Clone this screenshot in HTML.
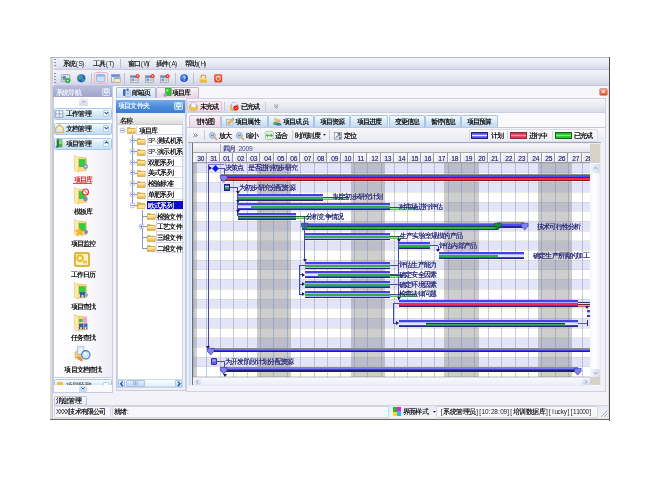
<!DOCTYPE html>
<html><head><meta charset="utf-8"><style>
html,body{margin:0;padding:0;}
body{width:660px;height:477px;position:relative;overflow:hidden;background:#fff;font-family:"Liberation Sans",sans-serif;}
.a{position:absolute;}
.t,.gl{position:absolute;white-space:nowrap;line-height:10px;font-size:7px;letter-spacing:-.8px;text-shadow:0 0 .15px currentColor;will-change:transform;}
.gl{text-shadow:0 0 .25px currentColor;}
i{display:inline-block;width:6.2px;font-style:normal;text-align:center;letter-spacing:0;}
.sb i{width:6.5px;}
.nc i{-webkit-text-fill-color:transparent;text-shadow:none;position:relative;}
.nc i::before{content:'';position:absolute;left:0.5px;top:1.6px;width:5.2px;height:5.8px;background:repeating-linear-gradient(currentColor 0 1px,transparent 1px 2px),linear-gradient(90deg,transparent 0 2px,currentColor 2px 3px,transparent 3px);opacity:.55;}
.l{text-shadow:none;letter-spacing:0;}
.l b{display:inline-block;width:3.1px;text-align:center;font-weight:normal;font-size:6.4px;}
.s{letter-spacing:0;font-size:6px;}
</style></head><body>
<div class="a " style="left:50px;top:57px;width:559.5px;height:363px;background:#f3f3f8;"></div>
<div class="a " style="left:50px;top:57px;width:2.3px;height:363px;background:#dedad2;"></div>
<div class="a " style="left:52.3px;top:57px;width:1.2px;height:363px;background:#c4c8e2;"></div>
<div class="a " style="left:608.6px;top:57px;width:1.2px;height:363.5px;background:#4a4a4a;"></div>
<div class="a " style="left:50px;top:419.3px;width:559.8px;height:1.0px;background:#7a7a7a;"></div>
<div class="a " style="left:53.5px;top:57px;width:555px;height:13.2px;background:linear-gradient(#f6f6fb,#e4e6f2 70%,#d6d9ea);border-bottom:1px solid #c6cadf;box-sizing:border-box;"></div>
<div class="a " style="left:50px;top:56.6px;width:559.5px;height:0.9px;background:#b4b8cc;"></div>
<div class="a " style="left:54.3px;top:59px;width:1.6px;height:9px;background:repeating-linear-gradient(#8a90b8 0 1px,transparent 1px 3px);"></div>
<div class="t " style="left:62.7px;top:58.90px;color:#222;"><i>系</i><i>统</i><span class="l"><b>(</b><b>S</b><b>)</b></span></div>
<div class="t " style="left:93px;top:58.90px;color:#222;"><i>工</i><i>具</i><span class="l"><b>(</b><b>T</b><b>)</b></span></div>
<div class="t " style="left:127.5px;top:58.90px;color:#222;"><i>窗</i><i>口</i><span class="l"><b>(</b><b>W</b><b>)</b></span></div>
<div class="t " style="left:156px;top:58.90px;color:#222;"><i>插</i><i>件</i><span class="l"><b>(</b><b>A</b><b>)</b></span></div>
<div class="t " style="left:185px;top:58.90px;color:#222;"><i>帮</i><i>助</i><span class="l"><b>(</b><b>H</b><b>)</b></span></div>
<div class="a " style="left:120.3px;top:59px;width:1px;height:9px;background:#b8bcd4;"></div>
<div class="a " style="left:53.5px;top:70.2px;width:555px;height:15.6px;background:linear-gradient(#f4f5fa,#e2e4f0 60%,#d2d5e6);border-bottom:1px solid #c0c4da;box-sizing:border-box;"></div>
<div class="a " style="left:54.3px;top:73px;width:1.6px;height:10px;background:repeating-linear-gradient(#8a90b8 0 1px,transparent 1px 3px);"></div>
<svg class="a" style="left:61.3px;top:73.8px;overflow:visible" width="9.5" height="8.8" viewBox="0 0 9.5 8.8"><rect x="0.4" y="0.6" width="8.4" height="7" rx="0.8" fill="#dfe6ee" stroke="#8c98a8" stroke-width="0.8"/><rect x="1.6" y="2.2" width="3.2" height="2.6" fill="#4a7ab8"/><rect x="1.6" y="4.8" width="3" height="1.4" fill="#60b070"/><circle cx="6.8" cy="6.6" r="2.3" fill="#2cb040" stroke="#1a7a28" stroke-width="0.4"/><circle cx="6.8" cy="6.6" r="0.9" fill="#d8f8d8"/></svg>
<svg class="a" style="left:76.7px;top:73.9px;overflow:visible" width="8.6" height="8.6" viewBox="0 0 8.6 8.6"><circle cx="4.3" cy="4.3" r="4.1" fill="#2060c8"/><circle cx="3.4" cy="3.2" r="2.4" fill="#5aa0f0" opacity="0.7"/><path d="M1.8 2.2C3 1.2 4.5 2 4.2 3.2C4 4.2 2.6 4.2 2.8 5.4C3 6.6 1.6 6.2 1.2 4.8Z" fill="#3ab040"/><path d="M5.2 4.6C6.4 4 7.6 4.8 7.2 6.2C6.8 7.4 5.4 7.8 5 6.8Z" fill="#3ab040"/></svg>
<div class="a " style="left:93.6px;top:72.2px;width:14.4px;height:11.7px;background:linear-gradient(#fdf0f4,#f6dfe8);border:1px solid #e4b4c8;border-radius:2px;box-sizing:border-box;"></div>
<svg class="a" style="left:96.2px;top:74.0px;overflow:visible" width="9.4" height="8.2" viewBox="0 0 9.4 8.2"><rect x="0.4" y="0.4" width="8.6" height="7.4" rx="1" fill="#cfe0f6" stroke="#7c9cd0" stroke-width="0.7"/><rect x="0.8" y="0.8" width="7.8" height="1.8" fill="#8cb4ec"/></svg>
<svg class="a" style="left:110.6px;top:73.8px;overflow:visible" width="9.6" height="8.8" viewBox="0 0 9.6 8.8"><rect x="0.4" y="0.4" width="8.4" height="7.8" fill="#e8ecf0" stroke="#8a98b0" stroke-width="0.7"/><rect x="0.8" y="0.8" width="7.6" height="2" fill="#5a88d8"/><rect x="3" y="3.6" width="6.2" height="4.8" fill="#f4e8c0" stroke="#a0a080" stroke-width="0.5"/><rect x="3.6" y="3.8" width="5" height="1.2" fill="#7aa0e0"/></svg>
<div class="a " style="left:90.5px;top:72.5px;width:0.9px;height:11.5px;background:#bcc0d6;"></div>
<div class="a " style="left:124.2px;top:72.5px;width:0.9px;height:11.5px;background:#bcc0d6;"></div>
<div class="a " style="left:174.7px;top:72.5px;width:0.9px;height:11.5px;background:#bcc0d6;"></div>
<div class="a " style="left:193.3px;top:72.5px;width:0.9px;height:11.5px;background:#bcc0d6;"></div>
<svg class="a" style="left:130.3px;top:73.5px;overflow:visible" width="9.6" height="9.2" viewBox="0 0 9.6 9.2"><rect x="0.4" y="1.6" width="8" height="7" fill="#f0ece0" stroke="#8a8a90" stroke-width="0.6"/><rect x="0.8" y="2" width="7.2" height="1.8" fill="#5a88d0"/><rect x="1.5" y="4.6" width="2.5" height="2.6" fill="#6a98d8"/><rect x="4.6" y="4.6" width="3" height="1" fill="#b0b0b0"/><rect x="4.6" y="6.2" width="3" height="1" fill="#b0b0b0"/><circle cx="7.6" cy="2.2" r="2.1" fill="#e83a30"/><path d="M6.8 1.4L8.4 3M8.4 1.4L6.8 3" stroke="#fff" stroke-width="0.6"/></svg>
<svg class="a" style="left:145.0px;top:73.5px;overflow:visible" width="9.6" height="9.2" viewBox="0 0 9.6 9.2"><rect x="0.4" y="1.6" width="8" height="7" fill="#f0ece0" stroke="#8a8a90" stroke-width="0.6"/><rect x="0.8" y="2" width="7.2" height="1.8" fill="#5a88d0"/><rect x="1.5" y="4.6" width="2.5" height="2.6" fill="#6a98d8"/><rect x="4.6" y="4.6" width="3" height="1" fill="#b0b0b0"/><rect x="4.6" y="6.2" width="3" height="1" fill="#b0b0b0"/><circle cx="7.6" cy="2.2" r="2.1" fill="#e83a30"/><path d="M6.8 1.4L8.4 3M8.4 1.4L6.8 3" stroke="#fff" stroke-width="0.6"/></svg>
<svg class="a" style="left:160.0px;top:73.5px;overflow:visible" width="9.6" height="9.2" viewBox="0 0 9.6 9.2"><rect x="0.4" y="1.6" width="8" height="7" fill="#f0ece0" stroke="#8a8a90" stroke-width="0.6"/><rect x="0.8" y="2" width="7.2" height="1.8" fill="#5a88d0"/><rect x="1.5" y="4.6" width="2.5" height="2.6" fill="#6a98d8"/><rect x="4.6" y="4.6" width="3" height="1" fill="#b0b0b0"/><rect x="4.6" y="6.2" width="3" height="1" fill="#b0b0b0"/><circle cx="7.6" cy="2.2" r="2.1" fill="#e83a30"/><path d="M6.8 1.4L8.4 3M8.4 1.4L6.8 3" stroke="#fff" stroke-width="0.6"/></svg>
<svg class="a" style="left:179.8px;top:74.2px;overflow:visible" width="8.2" height="8.2" viewBox="0 0 8.2 8.2"><circle cx="4.1" cy="4.1" r="3.9" fill="#2458c8"/><circle cx="3.6" cy="3.2" r="2.6" fill="#6aa0f0" opacity="0.65"/><path d="M2.9 3.2C2.9 2.2 5.3 2.2 5.3 3.3C5.3 4.2 4.1 4.2 4.1 5.2" stroke="#fff" stroke-width="0.8" fill="none"/><circle cx="4.1" cy="6.3" r="0.5" fill="#fff"/></svg>
<svg class="a" style="left:199.0px;top:73.6px;overflow:visible" width="8.6" height="9.0" viewBox="0 0 8.6 9.0"><path d="M2 4.2V2.8C2 0.4 6.6 0.4 6.6 2.8V4.2" stroke="#c8a040" stroke-width="1.1" fill="none"/><rect x="0.6" y="4" width="7.4" height="4.8" rx="0.6" fill="#e8c040"/><rect x="0.6" y="4" width="7.4" height="1.6" fill="#f8e080"/></svg>
<svg class="a" style="left:214.2px;top:73.8px;overflow:visible" width="8.4" height="8.6" viewBox="0 0 8.4 8.6"><rect x="0.2" y="0.2" width="8" height="8.2" rx="1.4" fill="#e84a28"/><rect x="0.6" y="0.5" width="7.2" height="3" rx="1" fill="#f88a68" opacity="0.6"/><circle cx="4.2" cy="4.4" r="2.1" stroke="#fff" stroke-width="0.8" fill="none"/><path d="M4.2 1.8V4.4" stroke="#fff" stroke-width="0.8"/></svg>
<div class="a " style="left:113px;top:86px;width:495.5px;height:12.2px;background:#f7f7fa;"></div>
<div class="a " style="left:116px;top:86.5px;width:40px;height:11.3px;background:linear-gradient(#f2f7fc,#c8dcf0);border:1px solid #a6bfdc;border-bottom:none;border-radius:2px 2px 0 0;box-sizing:border-box;"></div>
<svg class="a" style="left:121.9px;top:88.0px;overflow:visible" width="8.8" height="8.8" viewBox="0 0 8.8 8.8"><path d="M1 2.5C1 1 3 0.6 3.6 1.8V7.6C3 8.4 1 8.2 1 7Z" fill="#3a6ad0"/><rect x="3.8" y="2.6" width="4.4" height="5.8" fill="#e4ecf8" stroke="#7a98c8" stroke-width="0.5"/><path d="M4.6 4H7.4M4.6 5.4H7.4M4.6 6.8H7.4" stroke="#5a80c0" stroke-width="0.5"/><circle cx="5.6" cy="1.6" r="1.2" fill="#3a6ad0"/></svg>
<div class="t " style="left:131.8px;top:87.90px;color:#111;"><i>邮</i><i>箱</i><i>页</i></div>
<div class="a " style="left:155.6px;top:86.5px;width:43.8px;height:11.3px;background:linear-gradient(#fbf3f8,#e6d4e4);border:1px solid #c8b0c8;border-bottom:none;border-radius:2px 2px 0 0;box-sizing:border-box;"></div>
<svg class="a" style="left:163.3px;top:87.8px;overflow:visible" width="8.6" height="9.2" viewBox="0 0 8.6 9.2"><rect x="2.6" y="0.4" width="5.6" height="7.2" fill="#30c030" stroke="#1a8a1a" stroke-width="0.5"/><rect x="3.4" y="1.2" width="2" height="2.4" fill="#a0f0a0"/><circle cx="2.2" cy="7" r="1.8" fill="#9aa0b8"/></svg>
<div class="t " style="left:172px;top:87.90px;color:#111;"><i>项</i><i>目</i><i>库</i></div>
<div class="a " style="left:599px;top:87.6px;width:8.5px;height:8px;background:linear-gradient(#f89880,#e04828);border:1px solid #d8a090;border-radius:2px;box-sizing:border-box;color:#fff;font-size:7px;line-height:6px;text-align:center;font-weight:bold;">×</div>
<div class="a " style="left:52.8px;top:86.3px;width:60px;height:306.5px;background:#fff;border:1px solid #c8cce0;box-sizing:border-box;"></div>
<div class="a " style="left:53px;top:86.4px;width:59.3px;height:10.6px;background:linear-gradient(#b8bcdc,#9ea3cc);"></div>
<div class="t " style="left:55.9px;top:87.70px;color:#f4f4ff;"><i>系</i><i>统</i><i>导</i><i>航</i></div>
<div class="a " style="left:101.6px;top:87.8px;width:8.4px;height:8.2px;background:linear-gradient(#c4c8e6,#a8acd6);border:0.8px solid #d8dcf2;border-radius:1px;box-sizing:border-box;"></div>
<svg class="a" style="left:101.6px;top:87.8px;overflow:visible" width="8.4" height="8.2" viewBox="0 0 8.4 8.2"><path d="M2.6 1.6H5.8V4.4H2.6Z M1.6 4.6H6.8 M4.2 4.6V7" stroke="#f4f4ff" stroke-width="0.9" fill="none"/></svg>
<div class="a " style="left:78.6px;top:98.4px;width:9.4px;height:7.4px;background:linear-gradient(#f2f2f8,#d8dae8);border-radius:1.5px;"></div>
<svg class="a" style="left:78.6px;top:98.4px;overflow:visible" width="9.4" height="7.4" viewBox="0 0 9.4 7.4"><path d="M3 4.6L4.7 3L6.4 4.6" stroke="#8a90b0" stroke-width="0.9" fill="none"/></svg>
<div class="a " style="left:53.5px;top:107.5px;width:58px;height:12px;background:linear-gradient(#f6fbff,#d8ebf9 45%,#c2def5);border:1px solid #a8c8e8;border-radius:1.5px;box-sizing:border-box;"></div>
<div class="t " style="left:66.2px;top:109.20px;color:#1a1a1a;"><i>工</i><i>作</i><i>管</i><i>理</i></div>
<div class="a " style="left:102.5px;top:109.9px;width:6.8px;height:6.8px;background:linear-gradient(#ffffff,#eef5fc);border:0.8px solid #b8d0ea;border-radius:1px;box-sizing:border-box;"></div>
<svg class="a" style="left:102.5px;top:110.1px;overflow:visible" width="6.8" height="6.8" viewBox="0 0 6.8 6.8"><path d="M1.6 2.2L3.4 3.8L5.2 2.2" stroke="#2a50a8" stroke-width="1.1" fill="none"/></svg>
<svg class="a" style="left:55.3px;top:109.5px;overflow:visible" width="8.6" height="8" viewBox="0 0 8.6 8"><rect x="0.3" y="0.3" width="8" height="7.4" fill="#8a9ab8"/><rect x="1.2" y="1.1" width="2.7" height="2.4" fill="#f4f6fa"/><rect x="4.7" y="1.1" width="2.7" height="2.4" fill="#f4f6fa"/><rect x="1.2" y="4.3" width="2.7" height="2.5" fill="#f4f6fa"/><rect x="4.7" y="4.3" width="2.7" height="2.5" fill="#f4f6fa"/></svg>
<div class="a " style="left:53.5px;top:122.5px;width:58px;height:12px;background:linear-gradient(#f6fbff,#d8ebf9 45%,#c2def5);border:1px solid #a8c8e8;border-radius:1.5px;box-sizing:border-box;"></div>
<div class="t " style="left:66.2px;top:124.20px;color:#1a1a1a;"><i>文</i><i>档</i><i>管</i><i>理</i></div>
<div class="a " style="left:102.5px;top:124.9px;width:6.8px;height:6.8px;background:linear-gradient(#ffffff,#eef5fc);border:0.8px solid #b8d0ea;border-radius:1px;box-sizing:border-box;"></div>
<svg class="a" style="left:102.5px;top:125.1px;overflow:visible" width="6.8" height="6.8" viewBox="0 0 6.8 6.8"><path d="M1.6 2.2L3.4 3.8L5.2 2.2" stroke="#2a50a8" stroke-width="1.1" fill="none"/></svg>
<svg class="a" style="left:54.8px;top:124.0px;overflow:visible" width="9" height="9" viewBox="0 0 9 9"><path d="M0.8 4.2L4.5 0.8L8.2 4.2V8.2H0.8Z" fill="#eef4fc" stroke="#e0a828" stroke-width="1.1"/><path d="M1.4 4.6L4.5 6.6L7.6 4.6" stroke="#b8c8e0" stroke-width="0.6" fill="none"/></svg>
<div class="a " style="left:53.5px;top:137.5px;width:58px;height:12px;background:linear-gradient(#f6fbff,#d8ebf9 45%,#c2def5);border:1px solid #a8c8e8;border-radius:1.5px;box-sizing:border-box;"></div>
<div class="t " style="left:66.2px;top:139.20px;color:#1a1a1a;"><i>项</i><i>目</i><i>管</i><i>理</i></div>
<div class="a " style="left:102.5px;top:139.9px;width:6.8px;height:6.8px;background:linear-gradient(#ffffff,#eef5fc);border:0.8px solid #b8d0ea;border-radius:1px;box-sizing:border-box;"></div>
<svg class="a" style="left:102.5px;top:140.1px;overflow:visible" width="6.8" height="6.8" viewBox="0 0 6.8 6.8"><path d="M1.6 3.4L3.4 1.8L5.2 3.4" stroke="#2a50a8" stroke-width="1.1" fill="none"/></svg>
<svg class="a" style="left:55.6px;top:139.4px;overflow:visible" width="7" height="8.8" viewBox="0 0 7 8.8"><rect x="0.8" y="0.3" width="5.6" height="8" fill="#50a850"/><rect x="0.8" y="0.3" width="2" height="8" fill="#307a30"/><rect x="3" y="1" width="3" height="4" fill="#8ad08a"/><circle cx="1.2" cy="7.8" r="1" fill="#3050b0"/></svg>
<div class="a " style="left:53.5px;top:149.5px;width:58.3px;height:228.5px;background:linear-gradient(90deg,#ffffff,#fafafd 60%,#ececf5);"></div>
<svg class="a" style="left:74.4px;top:155.4px;overflow:visible" width="16" height="17.5" viewBox="0 0 16 17.5"><path d="M4 1.8L12.8 2.6V16L4 16.6Z" fill="#ecc45a"/><path d="M4.6 2.6L12.2 3.2V15.4L4.6 15.8Z" fill="#f6dc8a"/><rect x="5.2" y="4.6" width="6" height="7.2" fill="#30d040" stroke="#20a030" stroke-width="0.4"/><path d="M0.4 0.4L4.6 2.6V17.2L0.6 15.6Z" fill="#fbeaa8" stroke="#dcbc5c" stroke-width="0.5"/><circle cx="11.5" cy="11.5" r="2.4" fill="#7a88c8"/><circle cx="11.5" cy="11.5" r="1.2" fill="#c8d0f0"/></svg>
<div class="a " style="left:72.9px;top:183.10000000000002px;width:19px;height:0.8px;background:#f04040;"></div>
<div class="t " style="left:53.5px;top:175.30px;color:#e02020;width:58px;text-align:center;"><i>项</i><i>目</i><i>库</i></div>
<svg class="a" style="left:74.4px;top:187.02px;overflow:visible" width="16" height="17.5" viewBox="0 0 16 17.5"><path d="M4 1.8L12.8 2.6V16L4 16.6Z" fill="#ecc45a"/><path d="M4.6 2.6L12.2 3.2V15.4L4.6 15.8Z" fill="#f6dc8a"/><rect x="5.2" y="4.6" width="6" height="7.2" fill="#30d040" stroke="#20a030" stroke-width="0.4"/><path d="M0.4 0.4L4.6 2.6V17.2L0.6 15.6Z" fill="#fbeaa8" stroke="#dcbc5c" stroke-width="0.5"/><circle cx="11.5" cy="5" r="3" fill="#fff" stroke="#e83030" stroke-width="1.2"/><path d="M9.6 3.2L13.4 6.8" stroke="#e83030" stroke-width="1"/><circle cx="11.5" cy="12" r="2.2" fill="#7a88c8"/></svg>
<div class="t " style="left:53.5px;top:206.92px;color:#111;width:58px;text-align:center;"><i>模</i><i>板</i><i>库</i></div>
<svg class="a" style="left:74.4px;top:218.64000000000001px;overflow:visible" width="16" height="17.5" viewBox="0 0 16 17.5"><path d="M4 1.8L12.8 2.6V16L4 16.6Z" fill="#ecc45a"/><path d="M4.6 2.6L12.2 3.2V15.4L4.6 15.8Z" fill="#f6dc8a"/><rect x="5.2" y="4.6" width="6" height="7.2" fill="#30d040" stroke="#20a030" stroke-width="0.4"/><path d="M0.4 0.4L4.6 2.6V17.2L0.6 15.6Z" fill="#fbeaa8" stroke="#dcbc5c" stroke-width="0.5"/><path d="M5.5 8.5L6.8 11.3L9.8 11.5L7.5 13.4L8.3 16.3L5.5 14.6L2.7 16.3L3.5 13.4L1.2 11.5L4.2 11.3Z" fill="#f8c020" stroke="#e08010" stroke-width="0.4"/><circle cx="12" cy="13" r="2" fill="#7a88c8"/></svg>
<div class="t " style="left:53.5px;top:238.54px;color:#111;width:58px;text-align:center;"><i>项</i><i>目</i><i>监</i><i>控</i></div>
<svg class="a" style="left:74.2px;top:251.66000000000003px;overflow:visible" width="16" height="15" viewBox="0 0 16 15"><rect x="0.5" y="0.5" width="15" height="14" rx="1.5" fill="#e8b830" stroke="#c89820" stroke-width="0.6"/><rect x="2" y="2" width="12" height="11" rx="1" fill="#fcf4c8"/><circle cx="6" cy="6.2" r="3.4" fill="#f0c838" stroke="#c89820" stroke-width="0.6"/><circle cx="6" cy="6.2" r="1.6" fill="#fff4c0"/><rect x="9" y="8.5" width="4" height="3" fill="#f0c838"/></svg>
<div class="t " style="left:53.5px;top:270.16px;color:#111;width:58px;text-align:center;"><i>工</i><i>作</i><i>日</i><i>历</i></div>
<svg class="a" style="left:74.4px;top:281.88000000000005px;overflow:visible" width="16" height="17.5" viewBox="0 0 16 17.5"><path d="M4 1.8L12.8 2.6V16L4 16.6Z" fill="#ecc45a"/><path d="M4.6 2.6L12.2 3.2V15.4L4.6 15.8Z" fill="#f6dc8a"/><rect x="5.2" y="4.6" width="6" height="7.2" fill="#30d040" stroke="#20a030" stroke-width="0.4"/><path d="M0.4 0.4L4.6 2.6V17.2L0.6 15.6Z" fill="#fbeaa8" stroke="#dcbc5c" stroke-width="0.5"/><path d="M6 10H11V15.5H9.5V13H7.5V15.5H6Z" fill="#3a5ab8"/><circle cx="12.5" cy="13" r="1.8" fill="#a0a8d8"/></svg>
<div class="t " style="left:53.5px;top:301.78px;color:#111;width:58px;text-align:center;"><i>项</i><i>目</i><i>查</i><i>找</i></div>
<svg class="a" style="left:74.4px;top:313.5px;overflow:visible" width="16" height="17.5" viewBox="0 0 16 17.5"><path d="M4 1.8L12.8 2.6V16L4 16.6Z" fill="#ecc45a"/><path d="M4.6 2.6L12.2 3.2V15.4L4.6 15.8Z" fill="#f6dc8a"/><path d="M0.4 0.4L4.6 2.6V17.2L0.6 15.6Z" fill="#fbeaa8" stroke="#dcbc5c" stroke-width="0.5"/><rect x="8.5" y="3.5" width="4.5" height="5" fill="#f0a0d8"/><rect x="5" y="5" width="3.5" height="3" fill="#40c040"/><path d="M5 9.5H9V15.5H7.8V13H6.2V15.5H5Z" fill="#3a5ab8"/><path d="M9.5 9.5H13.5V15.5H12.3V13H10.7V15.5H9.5Z" fill="#4a6ac8"/></svg>
<div class="t " style="left:53.5px;top:333.40px;color:#111;width:58px;text-align:center;"><i>任</i><i>务</i><i>查</i><i>找</i></div>
<svg class="a" style="left:73.8px;top:345.52px;overflow:visible" width="18" height="16" viewBox="0 0 18 16"><path d="M1 6L8 2V15L1 12Z" fill="#f4d070" stroke="#c8a040" stroke-width="0.5"/><rect x="3.5" y="0.8" width="6.5" height="7.5" fill="#e8f0fc" stroke="#80a0d0" stroke-width="0.6"/><path d="M2.5 11L7 15.5L9 14L5 10Z" fill="#e89040"/><circle cx="11.8" cy="8.8" r="4.2" fill="#c8e8fc" stroke="#3a78b8" stroke-width="1.1"/><circle cx="11" cy="7.8" r="1.6" fill="#ffffff" opacity="0.8"/></svg>
<div class="t " style="left:53.5px;top:365.02px;color:#111;width:58px;text-align:center;"><i>项</i><i>目</i><i>文</i><i>档</i><i>查</i><i>找</i></div>
<div class="a " style="left:53.5px;top:376.9px;width:58.3px;height:0.9px;background:#c8cce6;"></div>
<div class="a" style="left:53.5px;top:379.3px;width:58.3px;height:5.4px;overflow:hidden;">
<div class="a" style="left:0;top:0;width:58px;height:12px;background:linear-gradient(#f6fbff,#d8ebf9 45%,#c2def5);border:1px solid #a8c8e8;border-radius:1.5px;box-sizing:border-box;"></div>
<div class="a" style="left:3px;top:2.4px;width:6px;height:5px;background:#f0c040;border-radius:1px;"></div>
<div class="t" style="left:12.7px;top:1.7px;color:#666;"><i>项</i><i>目</i><i>预</i><i>警</i></div>
<div class="a" style="left:49px;top:2.4px;width:6.8px;height:6.8px;background:#fff;border:0.8px solid #b8d0ea;border-radius:1px;box-sizing:border-box;"></div>
</div>
<div class="a " style="left:53.5px;top:384.7px;width:58.3px;height:7.6px;background:#fafafd;"></div>
<div class="a " style="left:78.6px;top:385.4px;width:8.2px;height:6.4px;background:linear-gradient(#e2eefa,#bcd8f2);border-radius:1.5px;"></div>
<svg class="a" style="left:78.6px;top:385.4px;overflow:visible" width="8.2" height="6.4" viewBox="0 0 8.2 6.4"><path d="M2.4 2.4L4.1 4L5.8 2.4" stroke="#2a50a8" stroke-width="1" fill="none"/></svg>
<div class="a " style="left:115.5px;top:99.5px;width:70px;height:291px;background:#eef0f8;border:1px solid #c8cce0;box-sizing:border-box;"></div>
<div class="a " style="left:115.6px;top:99.7px;width:69px;height:13px;background:linear-gradient(#74aee8,#4a8ad8 55%,#3e7ed0);"></div>
<div class="t " style="left:118.1px;top:101.30px;color:#f0f6ff;"><i>项</i><i>目</i><i>文</i><i>件</i><i>夹</i></div>
<div class="a " style="left:174px;top:102.2px;width:9px;height:8px;background:linear-gradient(#98c8f4,#68a4e8);border:0.8px solid #c0dcf8;border-radius:1px;box-sizing:border-box;"></div>
<svg class="a" style="left:174px;top:102.2px;overflow:visible" width="9" height="8" viewBox="0 0 9 8"><path d="M2.8 1.6H6.2V4.4H2.8Z M1.8 4.6H7.2 M4.5 4.6V7" stroke="#ffffff" stroke-width="0.9" fill="none"/></svg>
<div class="a " style="left:117.3px;top:114.8px;width:66px;height:273px;background:#fff;border:1px solid #d0d4e0;box-sizing:border-box;"></div>
<div class="a " style="left:117.7px;top:115px;width:65px;height:10.2px;background:linear-gradient(#f6f6f6,#dcdcdc);border-bottom:1px solid #c8c8c8;box-sizing:border-box;"></div>
<div class="t " style="left:120.3px;top:115.50px;color:#222;"><i>名</i><i>称</i></div>
<svg width="0" height="0" style="position:absolute"><defs><linearGradient id="fg" x1="0" y1="0" x2="0" y2="1"><stop offset="0" stop-color="#fff2b0"/><stop offset="1" stop-color="#e8b440"/></linearGradient></defs></svg>
<div class="a " style="left:135.8px;top:125.6px;width:47.8px;height:9.5px;border-left:0.8px solid #d4d8ee;border-bottom:0.8px solid #d4d8ee;box-sizing:border-box;"></div>
<svg class="a" style="left:120.0px;top:127.80000000000001px;overflow:visible" width="5" height="5" viewBox="0 0 5 5"><rect x="0.3" y="0.3" width="4.4" height="4.4" rx="1.2" fill="#fafbff" stroke="#8a96c8" stroke-width="0.6"/><path d="M1 2.5H4" stroke="#4a5a98" stroke-width="0.6"/></svg>
<svg class="a" style="left:127px;top:127.39999999999999px;overflow:visible" width="8.6" height="6.8" viewBox="0 0 8.6 6.8"><path d="M0.3 0.6H3.2L3.9 1.3H8.2V6.4H0.3Z" fill="#e0a838"/><rect x="0.5" y="2" width="7.6" height="4.3" fill="url(#fg)"/><path d="M0.3 0.6H3.2L3.9 1.3H8.2V6.4H0.3Z" fill="none" stroke="#b8903a" stroke-width="0.4"/></svg>
<div class="t " style="left:138.5px;top:125.80px;color:#111;"><i>项</i><i>目</i><i>库</i></div>
<div class="a " style="left:132.0px;top:134.5px;width:0.8px;height:71px;background:#8a96c8;"></div>
<div class="a " style="left:146.5px;top:135.4px;width:37.1px;height:10.7px;border-left:0.8px solid #d4d8ee;border-bottom:0.8px solid #d4d8ee;box-sizing:border-box;"></div>
<div class="a " style="left:132.4px;top:140.4px;width:4.6px;height:0.8px;background:#8a96c8;"></div>
<svg class="a" style="left:129.9px;top:138.3px;overflow:visible" width="5" height="5" viewBox="0 0 5 5"><rect x="0.3" y="0.3" width="4.4" height="4.4" rx="1.2" fill="#fafbff" stroke="#8a96c8" stroke-width="0.6"/><path d="M1 2.5H4M2.5 1V4" stroke="#4a5a98" stroke-width="0.6"/></svg>
<svg class="a" style="left:137px;top:138.0px;overflow:visible" width="8.6" height="6.8" viewBox="0 0 8.6 6.8"><path d="M0.3 0.6H3.2L3.9 1.3H8.2V6.4H0.3Z" fill="#e0a838"/><rect x="0.5" y="2" width="7.6" height="4.3" fill="url(#fg)"/><path d="M0.3 0.6H3.2L3.9 1.3H8.2V6.4H0.3Z" fill="none" stroke="#b8903a" stroke-width="0.4"/></svg>
<div class="t " style="left:148px;top:136.30px;color:#111;"><span class="l"><b>S</b><b>P</b><b>-</b></span><i>测</i><i>试</i><i>机</i><i>系</i></div>
<div class="a " style="left:146.5px;top:146.1px;width:37.1px;height:10.7px;border-left:0.8px solid #d4d8ee;border-bottom:0.8px solid #d4d8ee;box-sizing:border-box;"></div>
<div class="a " style="left:132.4px;top:151.1px;width:4.6px;height:0.8px;background:#8a96c8;"></div>
<svg class="a" style="left:129.9px;top:149.0px;overflow:visible" width="5" height="5" viewBox="0 0 5 5"><rect x="0.3" y="0.3" width="4.4" height="4.4" rx="1.2" fill="#fafbff" stroke="#8a96c8" stroke-width="0.6"/><path d="M1 2.5H4M2.5 1V4" stroke="#4a5a98" stroke-width="0.6"/></svg>
<svg class="a" style="left:137px;top:148.7px;overflow:visible" width="8.6" height="6.8" viewBox="0 0 8.6 6.8"><path d="M0.3 0.6H3.2L3.9 1.3H8.2V6.4H0.3Z" fill="#e0a838"/><rect x="0.5" y="2" width="7.6" height="4.3" fill="url(#fg)"/><path d="M0.3 0.6H3.2L3.9 1.3H8.2V6.4H0.3Z" fill="none" stroke="#b8903a" stroke-width="0.4"/></svg>
<div class="t " style="left:148px;top:147.00px;color:#111;"><span class="l"><b>S</b><b>P</b><b>-</b></span><i>演</i><i>示</i><i>机</i><i>系</i></div>
<div class="a " style="left:146.5px;top:156.8px;width:37.1px;height:10.7px;border-left:0.8px solid #d4d8ee;border-bottom:0.8px solid #d4d8ee;box-sizing:border-box;"></div>
<div class="a " style="left:132.4px;top:161.8px;width:4.6px;height:0.8px;background:#8a96c8;"></div>
<svg class="a" style="left:129.9px;top:159.70000000000002px;overflow:visible" width="5" height="5" viewBox="0 0 5 5"><rect x="0.3" y="0.3" width="4.4" height="4.4" rx="1.2" fill="#fafbff" stroke="#8a96c8" stroke-width="0.6"/><path d="M1 2.5H4M2.5 1V4" stroke="#4a5a98" stroke-width="0.6"/></svg>
<svg class="a" style="left:137px;top:159.4px;overflow:visible" width="8.6" height="6.8" viewBox="0 0 8.6 6.8"><path d="M0.3 0.6H3.2L3.9 1.3H8.2V6.4H0.3Z" fill="#e0a838"/><rect x="0.5" y="2" width="7.6" height="4.3" fill="url(#fg)"/><path d="M0.3 0.6H3.2L3.9 1.3H8.2V6.4H0.3Z" fill="none" stroke="#b8903a" stroke-width="0.4"/></svg>
<div class="t " style="left:148px;top:157.70px;color:#111;"><i>双</i><i>肥</i><i>系</i><i>列</i></div>
<div class="a " style="left:146.5px;top:167.5px;width:37.1px;height:10.7px;border-left:0.8px solid #d4d8ee;border-bottom:0.8px solid #d4d8ee;box-sizing:border-box;"></div>
<div class="a " style="left:132.4px;top:172.5px;width:4.6px;height:0.8px;background:#8a96c8;"></div>
<svg class="a" style="left:129.9px;top:170.4px;overflow:visible" width="5" height="5" viewBox="0 0 5 5"><rect x="0.3" y="0.3" width="4.4" height="4.4" rx="1.2" fill="#fafbff" stroke="#8a96c8" stroke-width="0.6"/><path d="M1 2.5H4M2.5 1V4" stroke="#4a5a98" stroke-width="0.6"/></svg>
<svg class="a" style="left:137px;top:170.1px;overflow:visible" width="8.6" height="6.8" viewBox="0 0 8.6 6.8"><path d="M0.3 0.6H3.2L3.9 1.3H8.2V6.4H0.3Z" fill="#e0a838"/><rect x="0.5" y="2" width="7.6" height="4.3" fill="url(#fg)"/><path d="M0.3 0.6H3.2L3.9 1.3H8.2V6.4H0.3Z" fill="none" stroke="#b8903a" stroke-width="0.4"/></svg>
<div class="t " style="left:148px;top:168.40px;color:#111;"><i>美</i><i>式</i><i>系</i><i>列</i></div>
<div class="a " style="left:146.5px;top:178.20000000000002px;width:37.1px;height:10.7px;border-left:0.8px solid #d4d8ee;border-bottom:0.8px solid #d4d8ee;box-sizing:border-box;"></div>
<div class="a " style="left:132.4px;top:183.20000000000002px;width:4.6px;height:0.8px;background:#8a96c8;"></div>
<svg class="a" style="left:129.9px;top:181.10000000000002px;overflow:visible" width="5" height="5" viewBox="0 0 5 5"><rect x="0.3" y="0.3" width="4.4" height="4.4" rx="1.2" fill="#fafbff" stroke="#8a96c8" stroke-width="0.6"/><path d="M1 2.5H4M2.5 1V4" stroke="#4a5a98" stroke-width="0.6"/></svg>
<svg class="a" style="left:137px;top:180.8px;overflow:visible" width="8.6" height="6.8" viewBox="0 0 8.6 6.8"><path d="M0.3 0.6H3.2L3.9 1.3H8.2V6.4H0.3Z" fill="#e0a838"/><rect x="0.5" y="2" width="7.6" height="4.3" fill="url(#fg)"/><path d="M0.3 0.6H3.2L3.9 1.3H8.2V6.4H0.3Z" fill="none" stroke="#b8903a" stroke-width="0.4"/></svg>
<div class="t " style="left:148px;top:179.10px;color:#111;"><i>检</i><i>验</i><i>标</i><i>准</i></div>
<div class="a " style="left:146.5px;top:188.9px;width:37.1px;height:10.7px;border-left:0.8px solid #d4d8ee;border-bottom:0.8px solid #d4d8ee;box-sizing:border-box;"></div>
<div class="a " style="left:132.4px;top:193.9px;width:4.6px;height:0.8px;background:#8a96c8;"></div>
<svg class="a" style="left:129.9px;top:191.8px;overflow:visible" width="5" height="5" viewBox="0 0 5 5"><rect x="0.3" y="0.3" width="4.4" height="4.4" rx="1.2" fill="#fafbff" stroke="#8a96c8" stroke-width="0.6"/><path d="M1 2.5H4M2.5 1V4" stroke="#4a5a98" stroke-width="0.6"/></svg>
<svg class="a" style="left:137px;top:191.5px;overflow:visible" width="8.6" height="6.8" viewBox="0 0 8.6 6.8"><path d="M0.3 0.6H3.2L3.9 1.3H8.2V6.4H0.3Z" fill="#e0a838"/><rect x="0.5" y="2" width="7.6" height="4.3" fill="url(#fg)"/><path d="M0.3 0.6H3.2L3.9 1.3H8.2V6.4H0.3Z" fill="none" stroke="#b8903a" stroke-width="0.4"/></svg>
<div class="t " style="left:148px;top:189.80px;color:#111;"><i>单</i><i>肥</i><i>系</i><i>列</i></div>
<div class="a " style="left:146.5px;top:199.6px;width:37.1px;height:10.7px;border-left:0.8px solid #d4d8ee;border-bottom:0.8px solid #d4d8ee;box-sizing:border-box;"></div>
<div class="a " style="left:132.4px;top:204.6px;width:4.6px;height:0.8px;background:#8a96c8;"></div>
<svg class="a" style="left:129.9px;top:202.5px;overflow:visible" width="5" height="5" viewBox="0 0 5 5"><rect x="0.3" y="0.3" width="4.4" height="4.4" rx="1.2" fill="#fafbff" stroke="#8a96c8" stroke-width="0.6"/><path d="M1 2.5H4" stroke="#4a5a98" stroke-width="0.6"/></svg>
<svg class="a" style="left:137px;top:202.2px;overflow:visible" width="9.4" height="6.8" viewBox="0 0 9.4 6.8"><path d="M0.3 0.6H3.2L3.9 1.3H7.6V6.4H0.3Z" fill="#e8b848" stroke="#b88a30" stroke-width="0.45"/><path d="M1.6 2.6H9L7.6 6.4H0.3Z" fill="#fde89a" stroke="#c89a38" stroke-width="0.45"/></svg>
<div class="a " style="left:147px;top:200.7px;width:35.8px;height:8.6px;background:#0a0ac0;"></div>
<div class="t " style="left:148px;top:200.50px;color:#fff;"><i>欧</i><i>式</i><i>系</i><i>列</i></div>
<div class="a " style="left:141.5px;top:210px;width:0.8px;height:38.4px;background:#8a96c8;"></div>
<div class="a " style="left:155.8px;top:210.6px;width:27.8px;height:10.7px;border-left:0.8px solid #d4d8ee;border-bottom:0.8px solid #d4d8ee;box-sizing:border-box;"></div>
<div class="a " style="left:141.8px;top:215.6px;width:5px;height:0.8px;background:#8a96c8;"></div>
<svg class="a" style="left:147px;top:213.2px;overflow:visible" width="8.6" height="6.8" viewBox="0 0 8.6 6.8"><path d="M0.3 0.6H3.2L3.9 1.3H8.2V6.4H0.3Z" fill="#e0a838"/><rect x="0.5" y="2" width="7.6" height="4.3" fill="url(#fg)"/><path d="M0.3 0.6H3.2L3.9 1.3H8.2V6.4H0.3Z" fill="none" stroke="#b8903a" stroke-width="0.4"/></svg>
<div class="t " style="left:157.3px;top:211.50px;color:#111;"><i>检</i><i>验</i><i>文</i><i>件</i></div>
<div class="a " style="left:155.8px;top:221.29999999999998px;width:27.8px;height:10.7px;border-left:0.8px solid #d4d8ee;border-bottom:0.8px solid #d4d8ee;box-sizing:border-box;"></div>
<div class="a " style="left:141.8px;top:226.29999999999998px;width:5px;height:0.8px;background:#8a96c8;"></div>
<svg class="a" style="left:139.4px;top:224.2px;overflow:visible" width="5" height="5" viewBox="0 0 5 5"><rect x="0.3" y="0.3" width="4.4" height="4.4" rx="1.2" fill="#fafbff" stroke="#8a96c8" stroke-width="0.6"/><path d="M1 2.5H4M2.5 1V4" stroke="#4a5a98" stroke-width="0.6"/></svg>
<svg class="a" style="left:147px;top:223.89999999999998px;overflow:visible" width="8.6" height="6.8" viewBox="0 0 8.6 6.8"><path d="M0.3 0.6H3.2L3.9 1.3H8.2V6.4H0.3Z" fill="#e0a838"/><rect x="0.5" y="2" width="7.6" height="4.3" fill="url(#fg)"/><path d="M0.3 0.6H3.2L3.9 1.3H8.2V6.4H0.3Z" fill="none" stroke="#b8903a" stroke-width="0.4"/></svg>
<div class="t " style="left:157.3px;top:222.20px;color:#111;"><i>工</i><i>艺</i><i>文</i><i>件</i></div>
<div class="a " style="left:155.8px;top:232.0px;width:27.8px;height:10.7px;border-left:0.8px solid #d4d8ee;border-bottom:0.8px solid #d4d8ee;box-sizing:border-box;"></div>
<div class="a " style="left:141.8px;top:237.0px;width:5px;height:0.8px;background:#8a96c8;"></div>
<svg class="a" style="left:147px;top:234.6px;overflow:visible" width="8.6" height="6.8" viewBox="0 0 8.6 6.8"><path d="M0.3 0.6H3.2L3.9 1.3H8.2V6.4H0.3Z" fill="#e0a838"/><rect x="0.5" y="2" width="7.6" height="4.3" fill="url(#fg)"/><path d="M0.3 0.6H3.2L3.9 1.3H8.2V6.4H0.3Z" fill="none" stroke="#b8903a" stroke-width="0.4"/></svg>
<div class="t " style="left:157.3px;top:232.90px;color:#111;"><i>三</i><i>维</i><i>文</i><i>件</i></div>
<div class="a " style="left:155.8px;top:242.7px;width:27.8px;height:10.7px;border-left:0.8px solid #d4d8ee;border-bottom:0.8px solid #d4d8ee;box-sizing:border-box;"></div>
<div class="a " style="left:141.8px;top:247.7px;width:5px;height:0.8px;background:#8a96c8;"></div>
<svg class="a" style="left:147px;top:245.29999999999998px;overflow:visible" width="8.6" height="6.8" viewBox="0 0 8.6 6.8"><path d="M0.3 0.6H3.2L3.9 1.3H8.2V6.4H0.3Z" fill="#e0a838"/><rect x="0.5" y="2" width="7.6" height="4.3" fill="url(#fg)"/><path d="M0.3 0.6H3.2L3.9 1.3H8.2V6.4H0.3Z" fill="none" stroke="#b8903a" stroke-width="0.4"/></svg>
<div class="t " style="left:157.3px;top:243.60px;color:#111;"><i>二</i><i>维</i><i>文</i><i>件</i></div>
<div class="a " style="left:117.5px;top:379.3px;width:65px;height:8.2px;background:linear-gradient(#fafcff,#e6f0fa);border:0.8px solid #c8dcf0;box-sizing:border-box;"></div>
<div class="a " style="left:117.8px;top:379.6px;width:7.6px;height:7.6px;background:linear-gradient(#eef6fe,#c4dcf4);border:0.7px solid #a8c8e8;border-radius:1px;box-sizing:border-box;"></div>
<svg class="a" style="left:117.8px;top:379.6px;overflow:visible" width="7.6" height="7.6" viewBox="0 0 7.6 7.6"><path d="M4.8 1.6L2.6 3.8L4.8 6" stroke="#2050b0" stroke-width="1.3" fill="none"/></svg>
<div class="a " style="left:126.0px;top:379.6px;width:18.5px;height:7.6px;background:linear-gradient(#e4f0fc,#bcd6f2);border:0.7px solid #a8c4e4;border-radius:1px;box-sizing:border-box;"></div>
<svg class="a" style="left:132.7px;top:381.4px;overflow:visible" width="5" height="4" viewBox="0 0 5 4"><path d="M0.8 0V4M2.5 0V4M4.2 0V4" stroke="#6a8ab8" stroke-width="0.6"/></svg>
<div class="a " style="left:174.8px;top:379.6px;width:7.6px;height:7.6px;background:linear-gradient(#eef6fe,#c4dcf4);border:0.7px solid #a8c8e8;border-radius:1px;box-sizing:border-box;"></div>
<svg class="a" style="left:174.8px;top:379.6px;overflow:visible" width="7.6" height="7.6" viewBox="0 0 7.6 7.6"><path d="M2.8 1.6L5 3.8L2.8 6" stroke="#2050b0" stroke-width="1.3" fill="none"/></svg>
<div class="a " style="left:186px;top:98.2px;width:419.5px;height:293.5px;background:#f2f2f8;border:1px solid #d0d2e4;box-sizing:border-box;"></div>
<div class="a " style="left:186.5px;top:98.8px;width:418.5px;height:14.5px;background:linear-gradient(#f6f6fb,#e8e9f2 55%,#d9dbe9);border-bottom:0.8px solid #cdd0e2;border-radius:0 2px 0 0;box-sizing:border-box;"></div>
<div class="a " style="left:187.3px;top:101.3px;width:35px;height:10.4px;background:linear-gradient(#f8eaf2,#eed6e6);border:0.9px solid #e2c2d8;border-radius:2px;box-sizing:border-box;"></div>
<svg class="a" style="left:189.3px;top:102.0px;overflow:visible" width="8.8" height="8.6" viewBox="0 0 8.8 8.6"><rect x="0.6" y="2.4" width="7.6" height="5.8" rx="1.6" fill="#f0c850" stroke="#c89830" stroke-width="0.6"/><path d="M2 0.6H6.2L7 1.4V6.4H2Z" fill="#f4f8ff" stroke="#80a8d8" stroke-width="0.5"/><rect x="1.2" y="5" width="6.4" height="2.8" rx="1" fill="#f0c850"/></svg>
<div class="t " style="left:199.5px;top:102.20px;color:#111;"><i>未</i><i>完</i><i>成</i></div>
<div class="a " style="left:224.1px;top:102px;width:0.9px;height:9px;background:#c8cadc;"></div>
<svg class="a" style="left:230.0px;top:102.0px;overflow:visible" width="9.6" height="8.8" viewBox="0 0 9.6 8.8"><rect x="0.6" y="2.4" width="7.6" height="5.8" rx="1.6" fill="#f0c850" stroke="#c89830" stroke-width="0.6"/><path d="M2 0.6H6.2L7 1.4V6.4H2Z" fill="#f4f8ff" stroke="#80a8d8" stroke-width="0.5"/><circle cx="5.8" cy="5.8" r="2.6" fill="#e82020"/><path d="M4.6 5.8L5.5 6.7L7 5" stroke="#fff" stroke-width="0.6" fill="none"/></svg>
<div class="t " style="left:241.0px;top:102.20px;color:#111;"><i>已</i><i>完</i><i>成</i></div>
<div class="a " style="left:265.4px;top:102px;width:0.9px;height:9px;background:#c8cadc;"></div>
<svg class="a" style="left:273.6px;top:104.0px;overflow:visible" width="4.6" height="5" viewBox="0 0 4.6 5"><path d="M0.5 0.5L2.3 2L4.1 0.5M0.5 2.6L2.3 4.1L4.1 2.6" stroke="#707080" stroke-width="0.8" fill="none"/></svg>
<div class="a " style="left:186.5px;top:113px;width:418.5px;height:14.5px;background:#fafafc;"></div>
<div class="a " style="left:188.7px;top:115px;width:32.30000000000001px;height:12px;background:linear-gradient(#fbf0f6,#ecd6e6);border:0.9px solid #d8bcd0;border-bottom:none;border-radius:2px 2px 0 0;box-sizing:border-box;"></div>
<div class="t " style="left:188.7px;top:116.50px;color:#111;width:32.30000000000001px;text-align:center;"><i>甘</i><i>特</i><i>图</i></div>
<div class="a " style="left:221px;top:115px;width:46.5px;height:12px;background:linear-gradient(#f6fafe,#d6e8f8 55%,#c0daf2);border:0.9px solid #a8c4e0;border-bottom:none;border-radius:2px 2px 0 0;box-sizing:border-box;"></div>
<svg class="a" style="left:225.5px;top:116.8px;overflow:visible" width="8.4" height="8.6" viewBox="0 0 8.4 8.6"><rect x="0.5" y="2.5" width="6.5" height="5.6" fill="#dce8f8" stroke="#7898c8" stroke-width="0.5"/><path d="M1.5 6L6.5 1.2L8 2.6L3 7.4Z" fill="#f0b840" stroke="#b88020" stroke-width="0.4"/><path d="M6.5 1.2L8 2.6" stroke="#40a040" stroke-width="0.8"/></svg>
<div class="t " style="left:235px;top:116.50px;color:#111;"><i>项</i><i>目</i><i>属</i><i>性</i></div>
<div class="a " style="left:267.5px;top:115px;width:46.19999999999999px;height:12px;background:linear-gradient(#f6fafe,#d6e8f8 55%,#c0daf2);border:0.9px solid #a8c4e0;border-bottom:none;border-radius:2px 2px 0 0;box-sizing:border-box;"></div>
<svg class="a" style="left:272.8px;top:117.0px;overflow:visible" width="8.4" height="8.8" viewBox="0 0 8.4 8.8"><circle cx="2.8" cy="2.6" r="1.8" fill="#f0c070"/><path d="M0.4 8V5.6C0.4 4.4 5.2 4.4 5.2 5.6V8Z" fill="#50b050"/><circle cx="5.8" cy="4" r="1.8" fill="#e8a870"/><path d="M3.2 8.6V6.8C3.2 5.8 8.2 5.8 8.2 6.8V8.6Z" fill="#4070c8"/></svg>
<div class="t " style="left:283.0px;top:116.50px;color:#111;"><i>项</i><i>目</i><i>成</i><i>员</i></div>
<div class="a " style="left:313.7px;top:115px;width:36.60000000000002px;height:12px;background:linear-gradient(#f6fafe,#d6e8f8 55%,#c0daf2);border:0.9px solid #a8c4e0;border-bottom:none;border-radius:2px 2px 0 0;box-sizing:border-box;"></div>
<div class="t " style="left:313.7px;top:116.50px;color:#111;width:36.60000000000002px;text-align:center;"><i>项</i><i>目</i><i>资</i><i>源</i></div>
<div class="a " style="left:350.3px;top:115px;width:38.19999999999999px;height:12px;background:linear-gradient(#f6fafe,#d6e8f8 55%,#c0daf2);border:0.9px solid #a8c4e0;border-bottom:none;border-radius:2px 2px 0 0;box-sizing:border-box;"></div>
<div class="t " style="left:350.3px;top:116.50px;color:#111;width:38.19999999999999px;text-align:center;"><i>项</i><i>目</i><i>进</i><i>度</i></div>
<div class="a " style="left:388.5px;top:115px;width:36.30000000000001px;height:12px;background:linear-gradient(#f6fafe,#d6e8f8 55%,#c0daf2);border:0.9px solid #a8c4e0;border-bottom:none;border-radius:2px 2px 0 0;box-sizing:border-box;"></div>
<div class="t " style="left:388.5px;top:116.50px;color:#111;width:36.30000000000001px;text-align:center;"><i>变</i><i>更</i><i>信</i><i>息</i></div>
<div class="a " style="left:424.8px;top:115px;width:36.39999999999998px;height:12px;background:linear-gradient(#f6fafe,#d6e8f8 55%,#c0daf2);border:0.9px solid #a8c4e0;border-bottom:none;border-radius:2px 2px 0 0;box-sizing:border-box;"></div>
<div class="t " style="left:424.8px;top:116.50px;color:#111;width:36.39999999999998px;text-align:center;"><i>暂</i><i>停</i><i>信</i><i>息</i></div>
<div class="a " style="left:461.2px;top:115px;width:36.400000000000034px;height:12px;background:linear-gradient(#f6fafe,#d6e8f8 55%,#c0daf2);border:0.9px solid #a8c4e0;border-bottom:none;border-radius:2px 2px 0 0;box-sizing:border-box;"></div>
<div class="t " style="left:461.2px;top:116.50px;color:#111;width:36.400000000000034px;text-align:center;"><i>项</i><i>目</i><i>预</i><i>算</i></div>
<div class="a " style="left:186.5px;top:127px;width:418.5px;height:0.9px;background:#c4c8dc;"></div>
<div class="a " style="left:187.5px;top:128px;width:416px;height:14px;background:linear-gradient(#f8f8fc,#e8e9f2);"></div>
<svg class="a" style="left:193.0px;top:133.0px;overflow:visible" width="5" height="4.4" viewBox="0 0 5 4.4"><path d="M0.5 0.5L2.2 2.2L0.5 3.9M2.6 0.5L4.3 2.2L2.6 3.9" stroke="#505060" stroke-width="0.8" fill="none"/></svg>
<div class="a " style="left:203.9px;top:130px;width:0.9px;height:10px;background:#c8cadc;"></div>
<svg class="a" style="left:208.6px;top:132.4px;overflow:visible" width="9" height="9" viewBox="0 0 9 9"><circle cx="3.4" cy="3.4" r="2.9" fill="#d8e8f8" stroke="#8a9ab0" stroke-width="0.9"/><rect x="1.9" y="2.4" width="3" height="2" fill="#6a90d0"/><path d="M5.6 5.6L8 8" stroke="#d8a030" stroke-width="1.4"/></svg>
<div class="t " style="left:218.5px;top:130.70px;color:#111;"><i>放</i><i>大</i></div>
<svg class="a" style="left:236.4px;top:132.4px;overflow:visible" width="9" height="9" viewBox="0 0 9 9"><circle cx="3.4" cy="3.4" r="2.9" fill="#d8e8f8" stroke="#8a9ab0" stroke-width="0.9"/><rect x="1.9" y="2.4" width="3" height="2" fill="#6a90d0"/><path d="M5.6 5.6L8 8" stroke="#d8a030" stroke-width="1.4"/></svg>
<div class="t " style="left:246.3px;top:130.70px;color:#111;"><i>缩</i><i>小</i></div>
<svg class="a" style="left:264.5px;top:130.9px;overflow:visible" width="8.6" height="8.8" viewBox="0 0 8.6 8.8"><rect x="0.4" y="0.4" width="7.8" height="8" rx="1.2" fill="#e4f2e0" stroke="#90c090" stroke-width="0.7"/><path d="M1.4 4.4H7.2M1.4 4.4L3 2.8M1.4 4.4L3 6M7.2 4.4L5.6 2.8M7.2 4.4L5.6 6" stroke="#30a030" stroke-width="0.9" fill="none"/></svg>
<div class="t " style="left:274.5px;top:130.70px;color:#111;"><i>适</i><i>合</i></div>
<div class="a " style="left:291.7px;top:130px;width:0.9px;height:10px;background:#c8cadc;"></div>
<div class="t " style="left:294.8px;top:130.70px;color:#111;"><i>时</i><i>间</i><i>刻</i><i>度</i></div>
<svg class="a" style="left:323.3px;top:134.4px;overflow:visible" width="3" height="2" viewBox="0 0 3 2"><path d="M0 0H3L1.5 1.8Z" fill="#222"/></svg>
<div class="a " style="left:329.2px;top:130px;width:0.9px;height:10px;background:#c8cadc;"></div>
<svg class="a" style="left:334.0px;top:131.8px;overflow:visible" width="8" height="7.6" viewBox="0 0 8 7.6"><rect x="0.4" y="0.4" width="7.2" height="6.8" fill="#fafafa" stroke="#707080" stroke-width="0.6"/><path d="M1.8 5.8L5.6 2" stroke="#202020" stroke-width="0.9"/><path d="M3.6 1.6H6V4" stroke="#202020" stroke-width="0.8" fill="none"/><rect x="4.6" y="4.6" width="2.6" height="2.2" fill="#5a88d8"/></svg>
<div class="t " style="left:344.0px;top:130.70px;color:#111;"><i>定</i><i>位</i></div>
<div class="a " style="left:469px;top:129px;width:128.5px;height:12.6px;background:linear-gradient(#fbfbfd,#eeeef6);border:1px solid #d8dae8;border-radius:2px;box-sizing:border-box;"></div>
<div class="a " style="left:471.4px;top:132px;width:17px;height:6.6px;background:linear-gradient(#5050f0 0 25%,#e8e8ff 45% 55%,#5050f0 75%);border:1px solid #202080;box-sizing:border-box;"></div>
<div class="t " style="left:491px;top:130.80px;color:#111;"><i>计</i><i>划</i></div>
<div class="a " style="left:507.3px;top:131px;width:1px;height:9px;background:#d0d2e0;"></div>
<div class="a " style="left:510px;top:132px;width:17px;height:6.6px;background:linear-gradient(#e83050 0 25%,#ff90a0 45% 55%,#e83050 75%);border:1px solid #803040;box-sizing:border-box;"></div>
<div class="t " style="left:529px;top:130.80px;color:#111;"><i>进</i><i>行</i><i>中</i></div>
<div class="a " style="left:552px;top:131px;width:1px;height:9px;background:#d0d2e0;"></div>
<div class="a " style="left:555px;top:132px;width:17px;height:6.6px;background:linear-gradient(#20c020 0 25%,#80f080 45% 55%,#20c020 75%);border:1px solid #206020;box-sizing:border-box;"></div>
<div class="t " style="left:574px;top:130.80px;color:#111;"><i>已</i><i>完</i><i>成</i></div>
<div class="a " style="left:187.8px;top:142.2px;width:413px;height:243.5px;background:#e8eaf4;border-top:1px solid #a8aabc;box-sizing:border-box;"></div>
<div class="a " style="left:188.7px;top:143px;width:2.4px;height:242px;background:linear-gradient(90deg,#b0d4f4,#e0f0fc);"></div>
<div class="a " style="left:192.1px;top:143.2px;width:0.9px;height:242px;background:#707070;"></div>
<div class="a " style="left:192.9px;top:143.7px;width:397.4px;height:9.6px;background:linear-gradient(#f8f8fb,#e2e2ea);border-bottom:1px solid #a8a8b4;box-sizing:border-box;"></div>
<div class="a " style="left:220.1px;top:143.7px;width:0.9px;height:9.6px;background:#b0b0bc;"></div>
<div class="t" style="left:222.6px;top:144.0px;color:#3a3a8a;"><i>四</i><i>月</i><span style="position:absolute;left:15.4px;top:0;font-size:6.6px;letter-spacing:-.1px;text-shadow:none;">2009</span></div>
<div class="a" style="left:192.9px;top:153.3px;width:397.4px;height:9.7px;overflow:hidden;background:#f0f0f4;">
<div class="a" style="left:0.6999999999999886px;top:0;width:13.4px;height:9.7px;background:linear-gradient(#fbfbfc,#e2e2e8);border-right:1px solid #9a9aa4;border-left:1px solid #ffffff;box-sizing:border-box;font-size:6.6px;line-height:12.6px;color:#40408c;text-align:center;letter-spacing:-.2px;will-change:transform;text-shadow:0 0 .2px currentColor;">30</div>
<div class="a" style="left:14.099999999999994px;top:0;width:13.4px;height:9.7px;background:linear-gradient(#fbfbfc,#e2e2e8);border-right:1px solid #9a9aa4;border-left:1px solid #ffffff;box-sizing:border-box;font-size:6.6px;line-height:12.6px;color:#40408c;text-align:center;letter-spacing:-.2px;will-change:transform;text-shadow:0 0 .2px currentColor;">31</div>
<div class="a" style="left:27.5px;top:0;width:13.4px;height:9.7px;background:linear-gradient(#fbfbfc,#e2e2e8);border-right:1px solid #9a9aa4;border-left:1px solid #ffffff;box-sizing:border-box;font-size:6.6px;line-height:12.6px;color:#40408c;text-align:center;letter-spacing:-.2px;will-change:transform;text-shadow:0 0 .2px currentColor;">01</div>
<div class="a" style="left:40.900000000000006px;top:0;width:13.4px;height:9.7px;background:linear-gradient(#fbfbfc,#e2e2e8);border-right:1px solid #9a9aa4;border-left:1px solid #ffffff;box-sizing:border-box;font-size:6.6px;line-height:12.6px;color:#40408c;text-align:center;letter-spacing:-.2px;will-change:transform;text-shadow:0 0 .2px currentColor;">02</div>
<div class="a" style="left:54.30000000000001px;top:0;width:13.4px;height:9.7px;background:linear-gradient(#fbfbfc,#e2e2e8);border-right:1px solid #9a9aa4;border-left:1px solid #ffffff;box-sizing:border-box;font-size:6.6px;line-height:12.6px;color:#40408c;text-align:center;letter-spacing:-.2px;will-change:transform;text-shadow:0 0 .2px currentColor;">03</div>
<div class="a" style="left:67.70000000000002px;top:0;width:13.4px;height:9.7px;background:linear-gradient(#fbfbfc,#e2e2e8);border-right:1px solid #9a9aa4;border-left:1px solid #ffffff;box-sizing:border-box;font-size:6.6px;line-height:12.6px;color:#40408c;text-align:center;letter-spacing:-.2px;will-change:transform;text-shadow:0 0 .2px currentColor;">04</div>
<div class="a" style="left:81.1px;top:0;width:13.4px;height:9.7px;background:linear-gradient(#fbfbfc,#e2e2e8);border-right:1px solid #9a9aa4;border-left:1px solid #ffffff;box-sizing:border-box;font-size:6.6px;line-height:12.6px;color:#40408c;text-align:center;letter-spacing:-.2px;will-change:transform;text-shadow:0 0 .2px currentColor;">05</div>
<div class="a" style="left:94.49999999999997px;top:0;width:13.4px;height:9.7px;background:linear-gradient(#fbfbfc,#e2e2e8);border-right:1px solid #9a9aa4;border-left:1px solid #ffffff;box-sizing:border-box;font-size:6.6px;line-height:12.6px;color:#40408c;text-align:center;letter-spacing:-.2px;will-change:transform;text-shadow:0 0 .2px currentColor;">06</div>
<div class="a" style="left:107.9px;top:0;width:13.4px;height:9.7px;background:linear-gradient(#fbfbfc,#e2e2e8);border-right:1px solid #9a9aa4;border-left:1px solid #ffffff;box-sizing:border-box;font-size:6.6px;line-height:12.6px;color:#40408c;text-align:center;letter-spacing:-.2px;will-change:transform;text-shadow:0 0 .2px currentColor;">07</div>
<div class="a" style="left:121.29999999999998px;top:0;width:13.4px;height:9.7px;background:linear-gradient(#fbfbfc,#e2e2e8);border-right:1px solid #9a9aa4;border-left:1px solid #ffffff;box-sizing:border-box;font-size:6.6px;line-height:12.6px;color:#40408c;text-align:center;letter-spacing:-.2px;will-change:transform;text-shadow:0 0 .2px currentColor;">08</div>
<div class="a" style="left:134.70000000000002px;top:0;width:13.4px;height:9.7px;background:linear-gradient(#fbfbfc,#e2e2e8);border-right:1px solid #9a9aa4;border-left:1px solid #ffffff;box-sizing:border-box;font-size:6.6px;line-height:12.6px;color:#40408c;text-align:center;letter-spacing:-.2px;will-change:transform;text-shadow:0 0 .2px currentColor;">09</div>
<div class="a" style="left:148.1px;top:0;width:13.4px;height:9.7px;background:linear-gradient(#fbfbfc,#e2e2e8);border-right:1px solid #9a9aa4;border-left:1px solid #ffffff;box-sizing:border-box;font-size:6.6px;line-height:12.6px;color:#40408c;text-align:center;letter-spacing:-.2px;will-change:transform;text-shadow:0 0 .2px currentColor;">10</div>
<div class="a" style="left:161.49999999999997px;top:0;width:13.4px;height:9.7px;background:linear-gradient(#fbfbfc,#e2e2e8);border-right:1px solid #9a9aa4;border-left:1px solid #ffffff;box-sizing:border-box;font-size:6.6px;line-height:12.6px;color:#40408c;text-align:center;letter-spacing:-.2px;will-change:transform;text-shadow:0 0 .2px currentColor;">11</div>
<div class="a" style="left:174.9px;top:0;width:13.4px;height:9.7px;background:linear-gradient(#fbfbfc,#e2e2e8);border-right:1px solid #9a9aa4;border-left:1px solid #ffffff;box-sizing:border-box;font-size:6.6px;line-height:12.6px;color:#40408c;text-align:center;letter-spacing:-.2px;will-change:transform;text-shadow:0 0 .2px currentColor;">12</div>
<div class="a" style="left:188.30000000000004px;top:0;width:13.4px;height:9.7px;background:linear-gradient(#fbfbfc,#e2e2e8);border-right:1px solid #9a9aa4;border-left:1px solid #ffffff;box-sizing:border-box;font-size:6.6px;line-height:12.6px;color:#40408c;text-align:center;letter-spacing:-.2px;will-change:transform;text-shadow:0 0 .2px currentColor;">13</div>
<div class="a" style="left:201.70000000000002px;top:0;width:13.4px;height:9.7px;background:linear-gradient(#fbfbfc,#e2e2e8);border-right:1px solid #9a9aa4;border-left:1px solid #ffffff;box-sizing:border-box;font-size:6.6px;line-height:12.6px;color:#40408c;text-align:center;letter-spacing:-.2px;will-change:transform;text-shadow:0 0 .2px currentColor;">14</div>
<div class="a" style="left:215.1px;top:0;width:13.4px;height:9.7px;background:linear-gradient(#fbfbfc,#e2e2e8);border-right:1px solid #9a9aa4;border-left:1px solid #ffffff;box-sizing:border-box;font-size:6.6px;line-height:12.6px;color:#40408c;text-align:center;letter-spacing:-.2px;will-change:transform;text-shadow:0 0 .2px currentColor;">15</div>
<div class="a" style="left:228.49999999999997px;top:0;width:13.4px;height:9.7px;background:linear-gradient(#fbfbfc,#e2e2e8);border-right:1px solid #9a9aa4;border-left:1px solid #ffffff;box-sizing:border-box;font-size:6.6px;line-height:12.6px;color:#40408c;text-align:center;letter-spacing:-.2px;will-change:transform;text-shadow:0 0 .2px currentColor;">16</div>
<div class="a" style="left:241.9px;top:0;width:13.4px;height:9.7px;background:linear-gradient(#fbfbfc,#e2e2e8);border-right:1px solid #9a9aa4;border-left:1px solid #ffffff;box-sizing:border-box;font-size:6.6px;line-height:12.6px;color:#40408c;text-align:center;letter-spacing:-.2px;will-change:transform;text-shadow:0 0 .2px currentColor;">17</div>
<div class="a" style="left:255.30000000000004px;top:0;width:13.4px;height:9.7px;background:linear-gradient(#fbfbfc,#e2e2e8);border-right:1px solid #9a9aa4;border-left:1px solid #ffffff;box-sizing:border-box;font-size:6.6px;line-height:12.6px;color:#40408c;text-align:center;letter-spacing:-.2px;will-change:transform;text-shadow:0 0 .2px currentColor;">18</div>
<div class="a" style="left:268.70000000000005px;top:0;width:13.4px;height:9.7px;background:linear-gradient(#fbfbfc,#e2e2e8);border-right:1px solid #9a9aa4;border-left:1px solid #ffffff;box-sizing:border-box;font-size:6.6px;line-height:12.6px;color:#40408c;text-align:center;letter-spacing:-.2px;will-change:transform;text-shadow:0 0 .2px currentColor;">19</div>
<div class="a" style="left:282.1px;top:0;width:13.4px;height:9.7px;background:linear-gradient(#fbfbfc,#e2e2e8);border-right:1px solid #9a9aa4;border-left:1px solid #ffffff;box-sizing:border-box;font-size:6.6px;line-height:12.6px;color:#40408c;text-align:center;letter-spacing:-.2px;will-change:transform;text-shadow:0 0 .2px currentColor;">20</div>
<div class="a" style="left:295.5px;top:0;width:13.4px;height:9.7px;background:linear-gradient(#fbfbfc,#e2e2e8);border-right:1px solid #9a9aa4;border-left:1px solid #ffffff;box-sizing:border-box;font-size:6.6px;line-height:12.6px;color:#40408c;text-align:center;letter-spacing:-.2px;will-change:transform;text-shadow:0 0 .2px currentColor;">21</div>
<div class="a" style="left:308.9000000000001px;top:0;width:13.4px;height:9.7px;background:linear-gradient(#fbfbfc,#e2e2e8);border-right:1px solid #9a9aa4;border-left:1px solid #ffffff;box-sizing:border-box;font-size:6.6px;line-height:12.6px;color:#40408c;text-align:center;letter-spacing:-.2px;will-change:transform;text-shadow:0 0 .2px currentColor;">22</div>
<div class="a" style="left:322.30000000000007px;top:0;width:13.4px;height:9.7px;background:linear-gradient(#fbfbfc,#e2e2e8);border-right:1px solid #9a9aa4;border-left:1px solid #ffffff;box-sizing:border-box;font-size:6.6px;line-height:12.6px;color:#40408c;text-align:center;letter-spacing:-.2px;will-change:transform;text-shadow:0 0 .2px currentColor;">23</div>
<div class="a" style="left:335.70000000000005px;top:0;width:13.4px;height:9.7px;background:linear-gradient(#fbfbfc,#e2e2e8);border-right:1px solid #9a9aa4;border-left:1px solid #ffffff;box-sizing:border-box;font-size:6.6px;line-height:12.6px;color:#40408c;text-align:center;letter-spacing:-.2px;will-change:transform;text-shadow:0 0 .2px currentColor;">24</div>
<div class="a" style="left:349.1px;top:0;width:13.4px;height:9.7px;background:linear-gradient(#fbfbfc,#e2e2e8);border-right:1px solid #9a9aa4;border-left:1px solid #ffffff;box-sizing:border-box;font-size:6.6px;line-height:12.6px;color:#40408c;text-align:center;letter-spacing:-.2px;will-change:transform;text-shadow:0 0 .2px currentColor;">25</div>
<div class="a" style="left:362.5px;top:0;width:13.4px;height:9.7px;background:linear-gradient(#fbfbfc,#e2e2e8);border-right:1px solid #9a9aa4;border-left:1px solid #ffffff;box-sizing:border-box;font-size:6.6px;line-height:12.6px;color:#40408c;text-align:center;letter-spacing:-.2px;will-change:transform;text-shadow:0 0 .2px currentColor;">26</div>
<div class="a" style="left:375.9000000000001px;top:0;width:13.4px;height:9.7px;background:linear-gradient(#fbfbfc,#e2e2e8);border-right:1px solid #9a9aa4;border-left:1px solid #ffffff;box-sizing:border-box;font-size:6.6px;line-height:12.6px;color:#40408c;text-align:center;letter-spacing:-.2px;will-change:transform;text-shadow:0 0 .2px currentColor;">27</div>
<div class="a" style="left:389.30000000000007px;top:0;width:13.4px;height:9.7px;background:linear-gradient(#fbfbfc,#e2e2e8);border-right:1px solid #9a9aa4;border-left:1px solid #ffffff;box-sizing:border-box;font-size:6.6px;line-height:12.6px;color:#40408c;text-align:center;letter-spacing:-.2px;will-change:transform;text-shadow:0 0 .2px currentColor;">28</div>
</div>
<div class="a " style="left:192.9px;top:162.4px;width:397.4px;height:0.8px;background:#9a9aa8;"></div>
<div class="a" style="left:192.9px;top:163px;width:397.4px;height:213.5px;overflow:hidden;background:#fff;">
<div class="a" style="left:0.00px;top:0.00px;width:397.40px;height:9.70px;background:#e4e4f8;"></div>
<div class="a" style="left:0.00px;top:19.40px;width:397.40px;height:9.70px;background:#e4e4f8;"></div>
<div class="a" style="left:0.00px;top:38.80px;width:397.40px;height:9.70px;background:#e4e4f8;"></div>
<div class="a" style="left:0.00px;top:58.20px;width:397.40px;height:9.70px;background:#e4e4f8;"></div>
<div class="a" style="left:0.00px;top:77.60px;width:397.40px;height:9.70px;background:#e4e4f8;"></div>
<div class="a" style="left:0.00px;top:97.00px;width:397.40px;height:9.70px;background:#e4e4f8;"></div>
<div class="a" style="left:0.00px;top:116.40px;width:397.40px;height:9.70px;background:#e4e4f8;"></div>
<div class="a" style="left:0.00px;top:135.80px;width:397.40px;height:9.70px;background:#e4e4f8;"></div>
<div class="a" style="left:0.00px;top:155.20px;width:397.40px;height:9.70px;background:#e4e4f8;"></div>
<div class="a" style="left:0.00px;top:174.60px;width:397.40px;height:9.70px;background:#e4e4f8;"></div>
<div class="a" style="left:0.00px;top:194.00px;width:397.40px;height:9.70px;background:#e4e4f8;"></div>
<div class="a" style="left:0.00px;top:213.40px;width:397.40px;height:9.70px;background:#e4e4f8;"></div>
<div class="a" style="left:0.00px;top:-0.30px;width:397.40px;height:0.60px;background:rgba(210,200,160,0.35);"></div>
<div class="a" style="left:0.00px;top:9.40px;width:397.40px;height:0.60px;background:rgba(210,200,160,0.35);"></div>
<div class="a" style="left:0.00px;top:19.10px;width:397.40px;height:0.60px;background:rgba(210,200,160,0.35);"></div>
<div class="a" style="left:0.00px;top:28.80px;width:397.40px;height:0.60px;background:rgba(210,200,160,0.35);"></div>
<div class="a" style="left:0.00px;top:38.50px;width:397.40px;height:0.60px;background:rgba(210,200,160,0.35);"></div>
<div class="a" style="left:0.00px;top:48.20px;width:397.40px;height:0.60px;background:rgba(210,200,160,0.35);"></div>
<div class="a" style="left:0.00px;top:57.90px;width:397.40px;height:0.60px;background:rgba(210,200,160,0.35);"></div>
<div class="a" style="left:0.00px;top:67.60px;width:397.40px;height:0.60px;background:rgba(210,200,160,0.35);"></div>
<div class="a" style="left:0.00px;top:77.30px;width:397.40px;height:0.60px;background:rgba(210,200,160,0.35);"></div>
<div class="a" style="left:0.00px;top:87.00px;width:397.40px;height:0.60px;background:rgba(210,200,160,0.35);"></div>
<div class="a" style="left:0.00px;top:96.70px;width:397.40px;height:0.60px;background:rgba(210,200,160,0.35);"></div>
<div class="a" style="left:0.00px;top:106.40px;width:397.40px;height:0.60px;background:rgba(210,200,160,0.35);"></div>
<div class="a" style="left:0.00px;top:116.10px;width:397.40px;height:0.60px;background:rgba(210,200,160,0.35);"></div>
<div class="a" style="left:0.00px;top:125.80px;width:397.40px;height:0.60px;background:rgba(210,200,160,0.35);"></div>
<div class="a" style="left:0.00px;top:135.50px;width:397.40px;height:0.60px;background:rgba(210,200,160,0.35);"></div>
<div class="a" style="left:0.00px;top:145.20px;width:397.40px;height:0.60px;background:rgba(210,200,160,0.35);"></div>
<div class="a" style="left:0.00px;top:154.90px;width:397.40px;height:0.60px;background:rgba(210,200,160,0.35);"></div>
<div class="a" style="left:0.00px;top:164.60px;width:397.40px;height:0.60px;background:rgba(210,200,160,0.35);"></div>
<div class="a" style="left:0.00px;top:174.30px;width:397.40px;height:0.60px;background:rgba(210,200,160,0.35);"></div>
<div class="a" style="left:0.00px;top:184.00px;width:397.40px;height:0.60px;background:rgba(210,200,160,0.35);"></div>
<div class="a" style="left:0.00px;top:193.70px;width:397.40px;height:0.60px;background:rgba(210,200,160,0.35);"></div>
<div class="a" style="left:0.00px;top:203.40px;width:397.40px;height:0.60px;background:rgba(210,200,160,0.35);"></div>
<div class="a" style="left:0.00px;top:213.10px;width:397.40px;height:0.60px;background:rgba(210,200,160,0.35);"></div>
<div class="a" style="left:-29.85px;top:0.00px;width:34.20px;height:213.50px;background:rgba(120,120,120,0.36);"></div>
<div class="a" style="left:63.95px;top:0.00px;width:34.20px;height:213.50px;background:rgba(120,120,120,0.36);"></div>
<div class="a" style="left:157.75px;top:0.00px;width:34.20px;height:213.50px;background:rgba(120,120,120,0.36);"></div>
<div class="a" style="left:251.55px;top:0.00px;width:34.20px;height:213.50px;background:rgba(120,120,120,0.36);"></div>
<div class="a" style="left:345.35px;top:0.00px;width:34.20px;height:213.50px;background:rgba(120,120,120,0.36);"></div>
<div class="a" style="left:0.20px;top:0.00px;width:1.00px;height:213.50px;background:repeating-linear-gradient(rgba(100,130,190,0.45) 0 2px,rgba(100,130,190,0.25) 2px 3px);"></div>
<div class="a" style="left:13.60px;top:0.00px;width:1.00px;height:213.50px;background:repeating-linear-gradient(rgba(100,130,190,0.45) 0 2px,rgba(100,130,190,0.25) 2px 3px);"></div>
<div class="a" style="left:27.00px;top:0.00px;width:1.00px;height:213.50px;background:repeating-linear-gradient(rgba(100,130,190,0.45) 0 2px,rgba(100,130,190,0.25) 2px 3px);"></div>
<div class="a" style="left:40.40px;top:0.00px;width:1.00px;height:213.50px;background:repeating-linear-gradient(rgba(100,130,190,0.45) 0 2px,rgba(100,130,190,0.25) 2px 3px);"></div>
<div class="a" style="left:53.80px;top:0.00px;width:1.00px;height:213.50px;background:repeating-linear-gradient(rgba(100,130,190,0.45) 0 2px,rgba(100,130,190,0.25) 2px 3px);"></div>
<div class="a" style="left:67.20px;top:0.00px;width:1.00px;height:213.50px;background:repeating-linear-gradient(rgba(100,130,190,0.45) 0 2px,rgba(100,130,190,0.25) 2px 3px);"></div>
<div class="a" style="left:80.60px;top:0.00px;width:1.00px;height:213.50px;background:repeating-linear-gradient(rgba(100,130,190,0.45) 0 2px,rgba(100,130,190,0.25) 2px 3px);"></div>
<div class="a" style="left:94.00px;top:0.00px;width:1.00px;height:213.50px;background:repeating-linear-gradient(rgba(100,130,190,0.45) 0 2px,rgba(100,130,190,0.25) 2px 3px);"></div>
<div class="a" style="left:107.40px;top:0.00px;width:1.00px;height:213.50px;background:repeating-linear-gradient(rgba(100,130,190,0.45) 0 2px,rgba(100,130,190,0.25) 2px 3px);"></div>
<div class="a" style="left:120.80px;top:0.00px;width:1.00px;height:213.50px;background:repeating-linear-gradient(rgba(100,130,190,0.45) 0 2px,rgba(100,130,190,0.25) 2px 3px);"></div>
<div class="a" style="left:134.20px;top:0.00px;width:1.00px;height:213.50px;background:repeating-linear-gradient(rgba(100,130,190,0.45) 0 2px,rgba(100,130,190,0.25) 2px 3px);"></div>
<div class="a" style="left:147.60px;top:0.00px;width:1.00px;height:213.50px;background:repeating-linear-gradient(rgba(100,130,190,0.45) 0 2px,rgba(100,130,190,0.25) 2px 3px);"></div>
<div class="a" style="left:161.00px;top:0.00px;width:1.00px;height:213.50px;background:repeating-linear-gradient(rgba(100,130,190,0.45) 0 2px,rgba(100,130,190,0.25) 2px 3px);"></div>
<div class="a" style="left:174.40px;top:0.00px;width:1.00px;height:213.50px;background:repeating-linear-gradient(rgba(100,130,190,0.45) 0 2px,rgba(100,130,190,0.25) 2px 3px);"></div>
<div class="a" style="left:187.80px;top:0.00px;width:1.00px;height:213.50px;background:repeating-linear-gradient(rgba(100,130,190,0.45) 0 2px,rgba(100,130,190,0.25) 2px 3px);"></div>
<div class="a" style="left:201.20px;top:0.00px;width:1.00px;height:213.50px;background:repeating-linear-gradient(rgba(100,130,190,0.45) 0 2px,rgba(100,130,190,0.25) 2px 3px);"></div>
<div class="a" style="left:214.60px;top:0.00px;width:1.00px;height:213.50px;background:repeating-linear-gradient(rgba(100,130,190,0.45) 0 2px,rgba(100,130,190,0.25) 2px 3px);"></div>
<div class="a" style="left:228.00px;top:0.00px;width:1.00px;height:213.50px;background:repeating-linear-gradient(rgba(100,130,190,0.45) 0 2px,rgba(100,130,190,0.25) 2px 3px);"></div>
<div class="a" style="left:241.40px;top:0.00px;width:1.00px;height:213.50px;background:repeating-linear-gradient(rgba(100,130,190,0.45) 0 2px,rgba(100,130,190,0.25) 2px 3px);"></div>
<div class="a" style="left:254.80px;top:0.00px;width:1.00px;height:213.50px;background:repeating-linear-gradient(rgba(100,130,190,0.45) 0 2px,rgba(100,130,190,0.25) 2px 3px);"></div>
<div class="a" style="left:268.20px;top:0.00px;width:1.00px;height:213.50px;background:repeating-linear-gradient(rgba(100,130,190,0.45) 0 2px,rgba(100,130,190,0.25) 2px 3px);"></div>
<div class="a" style="left:281.60px;top:0.00px;width:1.00px;height:213.50px;background:repeating-linear-gradient(rgba(100,130,190,0.45) 0 2px,rgba(100,130,190,0.25) 2px 3px);"></div>
<div class="a" style="left:295.00px;top:0.00px;width:1.00px;height:213.50px;background:repeating-linear-gradient(rgba(100,130,190,0.45) 0 2px,rgba(100,130,190,0.25) 2px 3px);"></div>
<div class="a" style="left:308.40px;top:0.00px;width:1.00px;height:213.50px;background:repeating-linear-gradient(rgba(100,130,190,0.45) 0 2px,rgba(100,130,190,0.25) 2px 3px);"></div>
<div class="a" style="left:321.80px;top:0.00px;width:1.00px;height:213.50px;background:repeating-linear-gradient(rgba(100,130,190,0.45) 0 2px,rgba(100,130,190,0.25) 2px 3px);"></div>
<div class="a" style="left:335.20px;top:0.00px;width:1.00px;height:213.50px;background:repeating-linear-gradient(rgba(100,130,190,0.45) 0 2px,rgba(100,130,190,0.25) 2px 3px);"></div>
<div class="a" style="left:348.60px;top:0.00px;width:1.00px;height:213.50px;background:repeating-linear-gradient(rgba(100,130,190,0.45) 0 2px,rgba(100,130,190,0.25) 2px 3px);"></div>
<div class="a" style="left:362.00px;top:0.00px;width:1.00px;height:213.50px;background:repeating-linear-gradient(rgba(100,130,190,0.45) 0 2px,rgba(100,130,190,0.25) 2px 3px);"></div>
<div class="a" style="left:375.40px;top:0.00px;width:1.00px;height:213.50px;background:repeating-linear-gradient(rgba(100,130,190,0.45) 0 2px,rgba(100,130,190,0.25) 2px 3px);"></div>
<div class="a" style="left:388.80px;top:0.00px;width:1.00px;height:213.50px;background:repeating-linear-gradient(rgba(100,130,190,0.45) 0 2px,rgba(100,130,190,0.25) 2px 3px);"></div>
<div class="a" style="left:402.20px;top:0.00px;width:1.00px;height:213.50px;background:repeating-linear-gradient(rgba(100,130,190,0.45) 0 2px,rgba(100,130,190,0.25) 2px 3px);"></div>
<div class="a" style="left:14.90px;top:1.00px;width:0.80px;height:183.80px;background:#4a4aa4;"></div>
<div class="a" style="left:15.30px;top:1.00px;width:16.30px;height:0.80px;background:#7a7ac8;"></div>
<div class="a" style="left:15.30px;top:4.60px;width:3.30px;height:0.80px;background:#4a4aa4;"></div>
<div class="a" style="left:16.50px;top:2.80px;width:0.00px;height:0.00px;border-top:2.2px solid transparent;border-bottom:2.2px solid transparent;border-left:3.2px solid #1a1a70;"></div>
<svg class="a" style="left:19.50px;top:1.80px" width="7" height="7" viewBox="0 0 7 7"><path d="M3.5 0L7 3.5L3.5 7L0 3.5Z" fill="#0818f8"/></svg>
<div class="a" style="left:26.30px;top:4.60px;width:5.30px;height:0.80px;background:#4a4aa4;"></div>
<div class="a" style="left:31.10px;top:5.00px;width:0.80px;height:7.00px;background:#4a4aa4;"></div>
<div class="gl" style="left:32.10px;top:0.35px;color:#2a2a7a;"><i>决</i><i>策</i><i>点</i><span class="s">&nbsp;</span>&nbsp;&nbsp;<i>是</i><i>否</i><i>进</i><i>行</i><i>初</i><i>步</i><i>研</i><i>究</i></div>
<div class="a" style="left:28.60px;top:11.40px;width:378.50px;height:6.90px;background:linear-gradient(#8c8c8c 0 1.3px,#4c4cf4 1.3px 3.2px,#28288a 3.2px 3.8px,#ff3030 3.8px 6.3px,#7a2020 6.3px);"></div>
<svg class="a" style="left:27.50px;top:11.60px;overflow:visible" width="7.4" height="7.4" viewBox="0 0 7.4 7.4"><defs><linearGradient id="g2204_1" x1="0" y1="0" x2="0" y2="1"><stop offset="0" stop-color="#8080f8"/><stop offset="1" stop-color="#8080f8"/></linearGradient></defs><path d="M0.3 0.3H7.1V3.2L3.7 7.1L0.3 3.2Z" fill="url(#g2204_1)" stroke="#2a2a90" stroke-width="0.6" stroke-linejoin="round"/></svg>
<div class="a" style="left:31.50px;top:21.20px;width:5.40px;height:6.60px;background:linear-gradient(#22227a 0 0.6px,#4c4cf0 0.6px 2px,#c0c4ff 2px 2.8px,#1a4a2a 2.8px 3.2px,#28ac48 3.2px 4.6px,#3c3cd0 4.6px 6px,#22227a 6px);border-left:0.6px solid #22227a;border-right:0.6px solid #22227a;box-sizing:border-box;"></div>
<div class="a" style="left:36.90px;top:24.00px;width:8.10px;height:0.80px;background:#4a4aa4;"></div>
<div class="a" style="left:44.60px;top:24.40px;width:0.80px;height:29.10px;background:#4a4aa4;"></div>
<div class="gl" style="left:46.30px;top:19.75px;color:#2a2a7a;"><i>为</i><i>初</i><i>步</i><i>研</i><i>究</i><i>分</i><i>配</i><i>资</i><i>源</i></div>
<div class="a" style="left:43.20px;top:27.50px;width:0.00px;height:0.00px;border-left:2.2px solid transparent;border-right:2.2px solid transparent;border-top:3.2px solid #1a1a70;"></div>
<div class="a" style="left:43.20px;top:37.20px;width:0.00px;height:0.00px;border-left:2.2px solid transparent;border-right:2.2px solid transparent;border-top:3.2px solid #1a1a70;"></div>
<div class="a" style="left:43.20px;top:46.90px;width:0.00px;height:0.00px;border-left:2.2px solid transparent;border-right:2.2px solid transparent;border-top:3.2px solid #1a1a70;"></div>
<div class="a" style="left:45.40px;top:30.70px;width:85.20px;height:7.00px;background:linear-gradient(#3434a8 0 0.4px,#4242ea 0.4px 2.0px,#b0b2ff 2.0px 3.0px,#e0e2ff 3.0px 4.6px,#b0b2ff 4.6px 5.5px,#4444e0 5.5px 6.3px,#26267e 6.3px);"></div>
<div class="a" style="left:45.40px;top:33.70px;width:85.20px;height:2.80px;background:linear-gradient(#1a4a1a 0 0.5px,#30b044 0.5px 2.0px,#2a70a0 2.0px);"></div>
<div class="a" style="left:130.60px;top:33.90px;width:25.50px;height:3.00px;background:linear-gradient(#2a5a30 0 0.6px,#98ec98 0.6px 1.8px,#60c060 1.8px 2.6px,#2a5a30 2.6px);"></div>
<div class="gl" style="left:140.10px;top:29.45px;color:#2a2a7a;"><i>制</i><i>定</i><i>初</i><i>步</i><i>研</i><i>究</i><i>计</i><i>划</i></div>
<div class="a" style="left:45.40px;top:40.40px;width:151.90px;height:7.00px;background:linear-gradient(#3434a8 0 0.4px,#4242ea 0.4px 2.0px,#b0b2ff 2.0px 3.0px,#e0e2ff 3.0px 4.6px,#b0b2ff 4.6px 5.5px,#4444e0 5.5px 6.3px,#26267e 6.3px);"></div>
<div class="a" style="left:58.30px;top:43.40px;width:139.00px;height:2.80px;background:linear-gradient(#1a4a1a 0 0.5px,#30b044 0.5px 2.0px,#2a70a0 2.0px);"></div>
<div class="a" style="left:197.30px;top:43.60px;width:26.40px;height:3.00px;background:linear-gradient(#2a5a30 0 0.6px,#98ec98 0.6px 1.8px,#60c060 1.8px 2.6px,#2a5a30 2.6px);"></div>
<div class="gl" style="left:206.60px;top:39.15px;color:#2a2a7a;"><i>对</i><i>市</i><i>场</i><i>进</i><i>行</i><i>评</i><i>估</i></div>
<div class="a" style="left:45.40px;top:50.10px;width:58.00px;height:7.00px;background:linear-gradient(#3434a8 0 0.4px,#4242ea 0.4px 2.0px,#b0b2ff 2.0px 3.0px,#e0e2ff 3.0px 4.6px,#b0b2ff 4.6px 5.5px,#4444e0 5.5px 6.3px,#26267e 6.3px);"></div>
<div class="a" style="left:45.40px;top:53.10px;width:58.00px;height:2.80px;background:linear-gradient(#1a4a1a 0 0.5px,#30b044 0.5px 2.0px,#2a70a0 2.0px);"></div>
<div class="a" style="left:103.40px;top:53.30px;width:13.40px;height:3.00px;background:linear-gradient(#2a5a30 0 0.6px,#98ec98 0.6px 1.8px,#60c060 1.8px 2.6px,#2a5a30 2.6px);"></div>
<div class="gl" style="left:113.10px;top:48.85px;color:#2a2a7a;"><i>分</i><i>析</i><i>竞</i><i>争</i><i>情</i><i>况</i></div>
<div class="a" style="left:109.60px;top:59.90px;width:194.50px;height:6.90px;background:linear-gradient(#8c8c8c 0 1.3px,#4c4cf4 1.3px 3.2px,#1a4a2a 3.2px 3.8px,#28b840 3.8px 6.3px,#1a4a2a 6.3px);"></div>
<div class="a" style="left:304.10px;top:58.90px;width:27.00px;height:4.30px;background:linear-gradient(#8a8a8a 0 0.9px,#e8e8f0 0.9px 1.2px,#7878ff 1.2px 2.2px,#4040e0 2.2px 3.2px,#20207a 3.2px);"></div>
<div class="a" style="left:304.10px;top:59.90px;width:27.00px;height:4.80px;background:linear-gradient(#8c8c8c 0 1.3px,#4c4cf4 1.3px 3.2px,#28288a 3.2px);"></div>
<svg class="a" style="left:108.40px;top:60.00px;overflow:visible" width="7.4" height="7.4" viewBox="0 0 7.4 7.4"><defs><linearGradient id="g3013_6" x1="0" y1="0" x2="0" y2="1"><stop offset="0" stop-color="#5050e8"/><stop offset="1" stop-color="#18a028"/></linearGradient></defs><path d="M0.3 0.3H7.1V3.2L3.7 7.1L0.3 3.2Z" fill="url(#g3013_6)" stroke="#2a2a90" stroke-width="0.6" stroke-linejoin="round"/></svg>
<svg class="a" style="left:327.70px;top:60.00px;overflow:visible" width="7.4" height="7.4" viewBox="0 0 7.4 7.4"><defs><linearGradient id="g5206_6" x1="0" y1="0" x2="0" y2="1"><stop offset="0" stop-color="#8080f8"/><stop offset="1" stop-color="#8080f8"/></linearGradient></defs><path d="M0.3 0.3H7.1V3.2L3.7 7.1L0.3 3.2Z" fill="url(#g5206_6)" stroke="#2a2a90" stroke-width="0.6" stroke-linejoin="round"/></svg>
<svg class="a" style="left:301.10px;top:60.00px;overflow:visible" width="7.4" height="7.4" viewBox="0 0 7.4 7.4"><defs><linearGradient id="g4940_6" x1="0" y1="0" x2="0" y2="1"><stop offset="0" stop-color="#1a9a2a"/><stop offset="1" stop-color="#0a6a18"/></linearGradient></defs><path d="M0.3 0.3H7.1V3.2L3.7 7.1L0.3 3.2Z" fill="url(#g4940_6)" stroke="#2a2a90" stroke-width="0.6" stroke-linejoin="round"/></svg>
<div class="gl" style="left:344.10px;top:58.55px;color:#2a2a7a;"><i>技</i><i>术</i><i>可</i><i>行</i><i>性</i><i>分</i><i>析</i></div>
<div class="a" style="left:111.50px;top:53.50px;width:0.80px;height:44.50px;background:#4a4aa4;"></div>
<div class="a" style="left:109.70px;top:95.60px;width:0.00px;height:0.00px;border-left:2.2px solid transparent;border-right:2.2px solid transparent;border-top:3.2px solid #1a1a70;"></div>
<div class="a" style="left:106.70px;top:101.60px;width:5.80px;height:0.80px;background:#4a4aa4;"></div>
<div class="a" style="left:106.30px;top:102.00px;width:0.80px;height:29.50px;background:#4a4aa4;"></div>
<div class="a" style="left:106.70px;top:111.30px;width:3.40px;height:0.80px;background:#4a4aa4;"></div>
<div class="a" style="left:109.30px;top:109.50px;width:0.00px;height:0.00px;border-top:2.2px solid transparent;border-bottom:2.2px solid transparent;border-left:3.2px solid #1a1a70;"></div>
<div class="a" style="left:106.70px;top:121.00px;width:3.40px;height:0.80px;background:#4a4aa4;"></div>
<div class="a" style="left:109.30px;top:119.20px;width:0.00px;height:0.00px;border-top:2.2px solid transparent;border-bottom:2.2px solid transparent;border-left:3.2px solid #1a1a70;"></div>
<div class="a" style="left:106.70px;top:130.70px;width:3.40px;height:0.80px;background:#4a4aa4;"></div>
<div class="a" style="left:109.30px;top:128.90px;width:0.00px;height:0.00px;border-top:2.2px solid transparent;border-bottom:2.2px solid transparent;border-left:3.2px solid #1a1a70;"></div>
<div class="a" style="left:112.60px;top:69.50px;width:84.70px;height:7.00px;background:linear-gradient(#3434a8 0 0.4px,#4242ea 0.4px 2.0px,#b0b2ff 2.0px 3.0px,#e0e2ff 3.0px 4.6px,#b0b2ff 4.6px 5.5px,#4444e0 5.5px 6.3px,#26267e 6.3px);"></div>
<div class="a" style="left:112.60px;top:72.50px;width:84.70px;height:2.80px;background:linear-gradient(#1a4a1a 0 0.5px,#30b044 0.5px 2.0px,#2a70a0 2.0px);"></div>
<div class="a" style="left:197.30px;top:72.70px;width:12.80px;height:3.00px;background:linear-gradient(#2a5a30 0 0.6px,#98ec98 0.6px 1.8px,#60c060 1.8px 2.6px,#2a5a30 2.6px);"></div>
<div class="gl" style="left:207.60px;top:68.25px;color:#2a2a7a;"><i>生</i><i>产</i><i>实</i><i>验</i><i>室</i><i>规</i><i>模</i><i>的</i><i>产</i><i>品</i></div>
<div class="a" style="left:112.60px;top:98.60px;width:84.70px;height:7.00px;background:linear-gradient(#3434a8 0 0.4px,#4242ea 0.4px 2.0px,#b0b2ff 2.0px 3.0px,#e0e2ff 3.0px 4.6px,#b0b2ff 4.6px 5.5px,#4444e0 5.5px 6.3px,#26267e 6.3px);"></div>
<div class="a" style="left:112.60px;top:101.60px;width:84.70px;height:2.80px;background:linear-gradient(#1a4a1a 0 0.5px,#30b044 0.5px 2.0px,#2a70a0 2.0px);"></div>
<div class="a" style="left:112.60px;top:108.30px;width:84.70px;height:7.00px;background:linear-gradient(#3434a8 0 0.4px,#4242ea 0.4px 2.0px,#b0b2ff 2.0px 3.0px,#e0e2ff 3.0px 4.6px,#b0b2ff 4.6px 5.5px,#4444e0 5.5px 6.3px,#26267e 6.3px);"></div>
<div class="a" style="left:125.10px;top:111.30px;width:72.20px;height:2.80px;background:linear-gradient(#1a4a1a 0 0.5px,#30b044 0.5px 2.0px,#2a70a0 2.0px);"></div>
<div class="a" style="left:197.30px;top:111.50px;width:12.80px;height:3.00px;background:linear-gradient(#2a5a30 0 0.6px,#98ec98 0.6px 1.8px,#60c060 1.8px 2.6px,#2a5a30 2.6px);"></div>
<div class="a" style="left:112.60px;top:118.00px;width:84.70px;height:7.00px;background:linear-gradient(#3434a8 0 0.4px,#4242ea 0.4px 2.0px,#b0b2ff 2.0px 3.0px,#e0e2ff 3.0px 4.6px,#b0b2ff 4.6px 5.5px,#4444e0 5.5px 6.3px,#26267e 6.3px);"></div>
<div class="a" style="left:112.60px;top:121.00px;width:84.70px;height:2.80px;background:linear-gradient(#1a4a1a 0 0.5px,#30b044 0.5px 2.0px,#2a70a0 2.0px);"></div>
<div class="a" style="left:112.60px;top:127.70px;width:84.70px;height:7.00px;background:linear-gradient(#3434a8 0 0.4px,#4242ea 0.4px 2.0px,#b0b2ff 2.0px 3.0px,#e0e2ff 3.0px 4.6px,#b0b2ff 4.6px 5.5px,#4444e0 5.5px 6.3px,#26267e 6.3px);"></div>
<div class="a" style="left:112.60px;top:130.70px;width:84.70px;height:2.80px;background:linear-gradient(#1a4a1a 0 0.5px,#30b044 0.5px 2.0px,#2a70a0 2.0px);"></div>
<div class="a" style="left:197.30px;top:130.90px;width:27.30px;height:3.00px;background:linear-gradient(#2a5a30 0 0.6px,#98ec98 0.6px 1.8px,#60c060 1.8px 2.6px,#2a5a30 2.6px);"></div>
<div class="a" style="left:205.50px;top:72.90px;width:0.80px;height:63.90px;background:#4a4aa4;"></div>
<div class="a" style="left:203.70px;top:76.00px;width:0.00px;height:0.00px;border-left:2.2px solid transparent;border-right:2.2px solid transparent;border-top:3.2px solid #1a1a70;"></div>
<div class="a" style="left:206.30px;top:79.20px;width:31.20px;height:7.00px;background:linear-gradient(#3434a8 0 0.4px,#4242ea 0.4px 2.0px,#b0b2ff 2.0px 3.0px,#e0e2ff 3.0px 4.6px,#b0b2ff 4.6px 5.5px,#4444e0 5.5px 6.3px,#26267e 6.3px);"></div>
<div class="a" style="left:206.30px;top:82.20px;width:31.20px;height:2.80px;background:linear-gradient(#1a4a1a 0 0.5px,#30b044 0.5px 2.0px,#2a70a0 2.0px);"></div>
<div class="a" style="left:237.50px;top:82.20px;width:8.10px;height:0.80px;background:#4a4aa4;"></div>
<div class="a" style="left:245.20px;top:82.60px;width:0.80px;height:5.70px;background:#4a4aa4;"></div>
<div class="a" style="left:243.40px;top:85.70px;width:0.00px;height:0.00px;border-left:2.2px solid transparent;border-right:2.2px solid transparent;border-top:3.2px solid #1a1a70;"></div>
<div class="gl" style="left:246.60px;top:77.95px;color:#2a2a7a;"><i>评</i><i>估</i><i>内</i><i>部</i><i>产</i><i>品</i></div>
<div class="a" style="left:246.30px;top:88.90px;width:85.30px;height:7.00px;background:linear-gradient(#3434a8 0 0.4px,#4242ea 0.4px 2.0px,#b0b2ff 2.0px 3.0px,#e0e2ff 3.0px 4.6px,#b0b2ff 4.6px 5.5px,#4444e0 5.5px 6.3px,#26267e 6.3px);"></div>
<div class="a" style="left:246.30px;top:91.90px;width:58.50px;height:2.80px;background:linear-gradient(#1a4a1a 0 0.5px,#30b044 0.5px 2.0px,#2a70a0 2.0px);"></div>
<div class="gl" style="left:340.60px;top:87.65px;color:#2a2a7a;"><i>确</i><i>定</i><i>生</i><i>产</i><i>所</i><i>需</i><i>的</i><i>加</i><i>工</i></div>
<div class="a" style="left:197.30px;top:101.60px;width:8.60px;height:0.80px;background:#4a4aa4;"></div>
<div class="gl" style="left:206.60px;top:97.35px;color:#2a2a7a;"><i>评</i><i>估</i><i>生</i><i>产</i><i>能</i><i>力</i></div>
<div class="a" style="left:197.30px;top:111.30px;width:8.60px;height:0.80px;background:#4a4aa4;"></div>
<div class="gl" style="left:206.60px;top:107.05px;color:#2a2a7a;"><i>确</i><i>定</i><i>安</i><i>全</i><i>因</i><i>素</i></div>
<div class="a" style="left:197.30px;top:121.00px;width:8.60px;height:0.80px;background:#4a4aa4;"></div>
<div class="gl" style="left:206.60px;top:116.75px;color:#2a2a7a;"><i>确</i><i>定</i><i>环</i><i>境</i><i>因</i><i>素</i></div>
<div class="a" style="left:197.30px;top:130.70px;width:8.60px;height:0.80px;background:#4a4aa4;"></div>
<div class="gl" style="left:206.60px;top:126.45px;color:#2a2a7a;"><i>检</i><i>查</i><i>法</i><i>律</i><i>问</i><i>题</i></div>
<div class="a" style="left:203.70px;top:134.10px;width:0.00px;height:0.00px;border-left:2.2px solid transparent;border-right:2.2px solid transparent;border-top:3.2px solid #1a1a70;"></div>
<div class="a" style="left:206.30px;top:137.40px;width:179.30px;height:7.00px;background:linear-gradient(#3434a8 0 0.4px,#4242ea 0.4px 2.0px,#b0b2ff 2.0px 3.0px,#e0e2ff 3.0px 4.6px,#b0b2ff 4.6px 5.5px,#4444e0 5.5px 6.3px,#26267e 6.3px);"></div>
<div class="a" style="left:206.30px;top:140.40px;width:179.30px;height:2.80px;background:linear-gradient(#5a1a3a 0 0.5px,#e83050 0.5px 2.0px,#a03060 2.0px);"></div>
<div class="a" style="left:385.60px;top:140.60px;width:11.50px;height:3.00px;background:linear-gradient(#5a2a30 0 0.6px,#f8a0a0 0.6px 1.8px,#e06060 1.8px 2.6px,#5a2a30 2.6px);"></div>
<div class="a" style="left:385.60px;top:139.20px;width:11.50px;height:0.80px;background:#30307a;"></div>
<div class="a" style="left:392.10px;top:142.70px;width:0.00px;height:0.00px;border-left:2.2px solid transparent;border-right:2.2px solid transparent;border-top:3.2px solid #1a1a70;"></div>
<div class="a" style="left:394.10px;top:147.10px;width:4.50px;height:6.50px;background:linear-gradient(#3434a8 0 0.4px,#4242ea 0.4px 2.0px,#b0b2ff 2.0px 3.0px,#e0e2ff 3.0px 4.6px,#b0b2ff 4.6px 5.5px,#4444e0 5.5px 6.3px,#26267e 6.3px);"></div>
<div class="a" style="left:200.60px;top:140.00px;width:5.70px;height:0.80px;background:#4a4aa4;"></div>
<div class="a" style="left:200.20px;top:140.40px;width:0.80px;height:19.80px;background:#4a4aa4;"></div>
<div class="a" style="left:200.60px;top:159.80px;width:4.00px;height:0.80px;background:#4a4aa4;"></div>
<div class="a" style="left:202.90px;top:158.00px;width:0.00px;height:0.00px;border-top:2.2px solid transparent;border-bottom:2.2px solid transparent;border-left:3.2px solid #1a1a70;"></div>
<div class="a" style="left:206.30px;top:156.80px;width:179.30px;height:7.00px;background:linear-gradient(#3434a8 0 0.4px,#4242ea 0.4px 2.0px,#b0b2ff 2.0px 3.0px,#e0e2ff 3.0px 4.6px,#b0b2ff 4.6px 5.5px,#4444e0 5.5px 6.3px,#26267e 6.3px);"></div>
<div class="a" style="left:232.70px;top:159.80px;width:139.00px;height:2.80px;background:linear-gradient(#1a4a1a 0 0.5px,#30b044 0.5px 2.0px,#2a70a0 2.0px);"></div>
<div class="a" style="left:385.60px;top:159.80px;width:9.50px;height:0.80px;background:#5a5aa0;"></div>
<div class="a" style="left:394.30px;top:157.20px;width:0.80px;height:6.00px;background:#30307a;"></div>
<div class="a" style="left:13.10px;top:182.70px;width:0.00px;height:0.00px;border-left:2.2px solid transparent;border-right:2.2px solid transparent;border-top:3.2px solid #1a1a70;"></div>
<div class="a" style="left:17.10px;top:185.00px;width:390.00px;height:4.30px;background:linear-gradient(#8a8a8a 0 0.9px,#e8e8f0 0.9px 1.2px,#7878ff 1.2px 2.2px,#4040e0 2.2px 3.2px,#20207a 3.2px);"></div>
<svg class="a" style="left:13.90px;top:185.30px;overflow:visible" width="7.4" height="7.4" viewBox="0 0 7.4 7.4"><defs><linearGradient id="g2068_19" x1="0" y1="0" x2="0" y2="1"><stop offset="0" stop-color="#8080f8"/><stop offset="1" stop-color="#8080f8"/></linearGradient></defs><path d="M0.3 0.3H7.1V3.2L3.7 7.1L0.3 3.2Z" fill="url(#g2068_19)" stroke="#2a2a90" stroke-width="0.6" stroke-linejoin="round"/></svg>
<div class="a" style="left:18.10px;top:195.00px;width:5.90px;height:6.80px;background:linear-gradient(#7070f8,#a8b0ff 40%,#5858e8 60%,#7070f0);border:0.7px solid #30309a;border-radius:1px;box-sizing:border-box;"></div>
<div class="a" style="left:23.50px;top:198.40px;width:8.40px;height:0.80px;background:#4a4aa4;"></div>
<div class="a" style="left:31.50px;top:198.80px;width:0.80px;height:6.40px;background:#4a4aa4;"></div>
<div class="gl" style="left:32.40px;top:194.35px;color:#2a2a7a;"><i>为</i><i>开</i><i>发</i><i>阶</i><i>段</i><i>计</i><i>划</i><i>分</i><i>配</i><i>资</i><i>源</i></div>
<div class="a" style="left:28.60px;top:204.40px;width:356.50px;height:4.30px;background:linear-gradient(#8a8a8a 0 0.9px,#e8e8f0 0.9px 1.2px,#7878ff 1.2px 2.2px,#4040e0 2.2px 3.2px,#20207a 3.2px);"></div>
<svg class="a" style="left:27.50px;top:204.30px;overflow:visible" width="7.4" height="7.4" viewBox="0 0 7.4 7.4"><defs><linearGradient id="g2204_21" x1="0" y1="0" x2="0" y2="1"><stop offset="0" stop-color="#8080f8"/><stop offset="1" stop-color="#8080f8"/></linearGradient></defs><path d="M0.3 0.3H7.1V3.2L3.7 7.1L0.3 3.2Z" fill="url(#g2204_21)" stroke="#2a2a90" stroke-width="0.6" stroke-linejoin="round"/></svg>
<svg class="a" style="left:381.10px;top:204.90px;overflow:visible" width="7.4" height="7.4" viewBox="0 0 7.4 7.4"><defs><linearGradient id="g5740_21" x1="0" y1="0" x2="0" y2="1"><stop offset="0" stop-color="#8080f8"/><stop offset="1" stop-color="#8080f8"/></linearGradient></defs><path d="M0.3 0.3H7.1V3.2L3.7 7.1L0.3 3.2Z" fill="url(#g5740_21)" stroke="#2a2a90" stroke-width="0.6" stroke-linejoin="round"/></svg>
<div class="a" style="left:29.70px;top:210.50px;width:0.00px;height:0.00px;border-left:2.2px solid transparent;border-right:2.2px solid transparent;border-top:3.2px solid #1a1a70;"></div>
</div>
<div class="a " style="left:590.3px;top:143.7px;width:9.7px;height:242px;background:linear-gradient(90deg,#f4f6fb,#ffffff 50%,#eef0f8);"></div>
<div class="a " style="left:590.3px;top:143.7px;width:9.7px;height:19.5px;background:#d6d2c8;"></div>
<div class="a " style="left:590.5px;top:164px;width:9.2px;height:8.5px;background:linear-gradient(90deg,#eef2fa,#d4dcf0);border-radius:1px;"></div>
<svg class="a" style="left:590.5px;top:164px;overflow:visible" width="9.2" height="8.5" viewBox="0 0 9.2 8.5"><path d="M2.8 5L4.6 3.2L6.4 5" stroke="#8090b8" stroke-width="0.9" fill="none"/></svg>
<div class="a " style="left:590.5px;top:368.6px;width:9.2px;height:8px;background:linear-gradient(90deg,#eef2fa,#d4dcf0);border-radius:1px;"></div>
<svg class="a" style="left:590.5px;top:368.6px;overflow:visible" width="9.2" height="8" viewBox="0 0 9.2 8"><path d="M2.8 3.2L4.6 5L6.4 3.2" stroke="#8090b8" stroke-width="0.9" fill="none"/></svg>
<div class="a " style="left:192.9px;top:376.5px;width:397.4px;height:8.8px;background:linear-gradient(#f8f9fd,#eceef6);border-top:1px solid #d8dae6;box-sizing:border-box;"></div>
<div class="a " style="left:193.5px;top:377.5px;width:7px;height:7.5px;background:linear-gradient(#eef2fa,#d4dcf0);border-radius:1px;"></div>
<svg class="a" style="left:193.5px;top:377.5px;overflow:visible" width="7" height="7.5" viewBox="0 0 7 7.5"><path d="M4.4 2L2.6 3.8L4.4 5.6" stroke="#8090b8" stroke-width="0.9" fill="none"/></svg>
<div class="a " style="left:582px;top:377.5px;width:7.5px;height:7.5px;background:linear-gradient(#eef2fa,#d4dcf0);border-radius:1px;"></div>
<svg class="a" style="left:582px;top:377.5px;overflow:visible" width="7.5" height="7.5" viewBox="0 0 7.5 7.5"><path d="M3.1 2L4.9 3.8L3.1 5.6" stroke="#8090b8" stroke-width="0.9" fill="none"/></svg>
<div class="a " style="left:590.3px;top:376.5px;width:9.7px;height:8.8px;background:#d6d2c8;"></div>
<div class="a " style="left:53.5px;top:393px;width:555px;height:12px;background:#f2f2f8;"></div>
<div class="a " style="left:54px;top:395.5px;width:33px;height:9.5px;background:linear-gradient(#fafafd,#e6e8f2);border:1px solid #c0c4d8;border-bottom:none;border-radius:2px 2px 0 0;box-sizing:border-box;"></div>
<div class="t " style="left:56px;top:395.70px;color:#111;"><i>消</i><i>息</i><i>管</i><i>理</i></div>
<div class="a " style="left:53.5px;top:404.8px;width:555px;height:14.5px;background:linear-gradient(#e8eaf4,#f4f5fa);border-top:1px solid #d0d2e0;box-sizing:border-box;"></div>
<div class="a " style="left:54px;top:406px;width:57px;height:11.6px;background:#f8f8fc;border:1px solid #d4d6e4;border-radius:1px;box-sizing:border-box;"></div>
<div class="t " style="left:55.5px;top:407.10px;color:#222;"><span class="l"><b>X</b><b>X</b><b>X</b><b>X</b></span><i>技</i><i>术</i><i>有</i><i>限</i><i>公</i><i>司</i></div>
<div class="a " style="left:112px;top:406px;width:276.5px;height:11.6px;background:#f8f8fc;border:1px solid #d4d6e4;border-radius:1px;box-sizing:border-box;"></div>
<div class="t " style="left:114px;top:407.10px;color:#222;"><i>就</i><i>绪</i><span class="l"><b>:</b></span></div>
<div class="a " style="left:392.5px;top:407.3px;width:8.5px;height:9px;background:conic-gradient(#e020e0 0 25%,#20c0f0 0 50%,#f0e020 0 75%,#20c020 0);"></div>
<div class="t " style="left:403px;top:407.10px;color:#222;"><i>界</i><i>面</i><i>样</i><i>式</i></div>
<svg class="a" style="left:432.8px;top:410.8px;overflow:visible" width="3" height="2" viewBox="0 0 3 2"><path d="M0 0H3L1.5 1.8Z" fill="#222"/></svg>
<div class="a " style="left:436.4px;top:406px;width:161.8px;height:11.6px;background:#f8f8fc;border:1px solid #d4d6e4;border-radius:1px;box-sizing:border-box;"></div>
<div class="t sb" style="left:440.0px;top:407.10px;color:#222;"><span class="l"><b>[</b></span><i>系</i><i>统</i><i>管</i><i>理</i><i>员</i><span class="l"><b>]</b><b>[</b><b>1</b><b>0</b><b>:</b><b>2</b><b>8</b><b>:</b><b>0</b><b>9</b><b>]</b><b>[</b></span><i>培</i><i>训</i><i>数</i><i>据</i><i>库</i><span class="l"><b>]</b><b>[</b><b>l</b><b>u</b><b>c</b><b>k</b><b>y</b><b>]</b><b>[</b><b>1</b><b>1</b><b>0</b><b>0</b><b>0</b><b>]</b></span></div>
<div class="a " style="left:600.5px;top:410px;width:7px;height:7px;background:repeating-linear-gradient(135deg,transparent 0 1.5px,#a0a4b8 1.5px 2.5px);clip-path:polygon(100% 0,100% 100%,0 100%);"></div>
<div class="a " style="left:607.5px;top:86px;width:1.2px;height:333.5px;background:#e6e2da;"></div>
<div class="a " style="left:53px;top:418.4px;width:555.6px;height:1.0px;background:#e6e2da;"></div>
<div class="a " style="left:608.6px;top:57px;width:1.2px;height:363.5px;background:#4a4a4a;"></div>
<div class="a " style="left:50px;top:419.3px;width:559.8px;height:1.0px;background:#6a6a6a;"></div>
<script>(function(){try{var s=document.createElement('span');s.style.cssText='position:absolute;left:0;top:0;font-family:"Liberation Sans",sans-serif;font-size:100px;white-space:nowrap;visibility:hidden;letter-spacing:0';s.textContent='项项项项';document.body.appendChild(s);var w=s.getBoundingClientRect().width;document.body.removeChild(s);if(Math.abs(w-400)>3)document.body.classList.add('nc');}catch(e){}})();</script>
</body></html>
